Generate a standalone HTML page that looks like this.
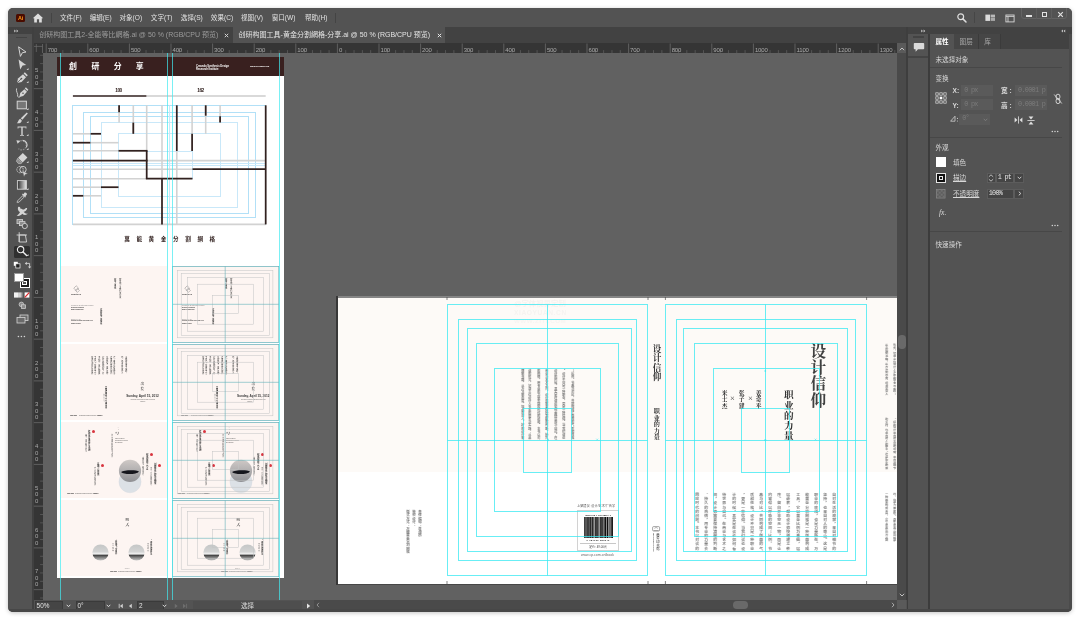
<!DOCTYPE html><html lang="zh"><head><meta charset="utf-8"><title>Illustrator</title><style>
html,body{margin:0;padding:0}
body{width:1080px;height:620px;background:#fff;position:relative;overflow:hidden;font-family:"Liberation Sans","Noto Sans CJK SC",sans-serif;}
#win{position:absolute;left:8px;top:8px;width:1064px;height:603.8px;background:#535353;border-radius:5px;overflow:hidden;}
#shadow{position:absolute;left:8px;top:8px;width:1064px;height:603.8px;border-radius:5px;box-shadow:0 1px 4px rgba(0,0,0,.24);}
#abs{position:absolute;left:-8px;top:-8px;width:1080px;height:620px;will-change:transform}
.a{position:absolute}
.menu{position:absolute;top:12.6px;font-size:6.6px;line-height:10px;color:#e2e2e2;white-space:nowrap}
.tab{position:absolute;top:30px;font-size:7px;line-height:10px;white-space:nowrap}
.rl{position:absolute;font-size:6px;line-height:6px;color:#aaa;white-space:nowrap;letter-spacing:-0.15px}
.pt{position:absolute;font-size:6.6px;line-height:9px;color:#d8d8d8;white-space:nowrap}
.v{writing-mode:vertical-rl;position:absolute;white-space:nowrap}
.serif{font-family:"Liberation Serif","Noto Serif CJK SC",serif}
</style></head><body>
<div id="shadow"></div><div id="win"><div id="abs">
<div class="a" style="left:8px;top:8px;width:1064px;height:19px;background:#535353"></div>
<div class="a" style="left:16.3px;top:14.2px;width:8.6px;height:7.6px;background:#4a0c00;border-radius:1.5px;"></div>
<div class="a" style="left:16.3px;top:14.6px;width:8.6px;height:7px;font-size:5.4px;line-height:7px;font-weight:bold;color:#ff9a1a;text-align:center;letter-spacing:-0.2px">Ai</div>
<svg class="a" style="left:32px;top:12.5px" width="12" height="10" viewBox="0 0 12 10"><path d="M6 0.6 L11.2 5.2 L9.8 5.2 L9.8 9.4 L7.1 9.4 L7.1 6.3 L4.9 6.3 L4.9 9.4 L2.2 9.4 L2.2 5.2 L0.8 5.2 Z" fill="#dedede"/></svg>
<div class="a" style="left:50.5px;top:12.5px;width:1px;height:10px;background:#444"></div>
<div class="menu" style="left:60px">文件(F)</div>
<div class="menu" style="left:89.7px">编辑(E)</div>
<div class="menu" style="left:119.4px">对象(O)</div>
<div class="menu" style="left:150.8px">文字(T)</div>
<div class="menu" style="left:180.8px">选择(S)</div>
<div class="menu" style="left:210.8px">效果(C)</div>
<div class="menu" style="left:241px">视图(V)</div>
<div class="menu" style="left:271.7px">窗口(W)</div>
<div class="menu" style="left:305px">帮助(H)</div>
<div class="a" style="left:334.6px;top:13px;width:1px;height:9.5px;background:#444"></div>
<svg class="a" style="left:955px;top:11px" width="14" height="14" viewBox="0 0 14 14"><circle cx="5.7" cy="5.7" r="2.9" fill="none" stroke="#dedede" stroke-width="1.2"/><path d="M7.9 7.9 L11 11" stroke="#dedede" stroke-width="1.5" stroke-linecap="round"/></svg>
<div class="a" style="left:973.6px;top:12.4px;width:1px;height:10.4px;background:#464646"></div>
<svg class="a" style="left:985px;top:14px" width="11" height="8" viewBox="0 0 11 8"><rect x="0.4" y="0.6" width="4.6" height="6.3" fill="#dcdcdc"/><rect x="5.6" y="0.6" width="4.4" height="2.9" fill="#b9b9b9"/><rect x="5.6" y="4" width="4.4" height="2.9" fill="#a9a9a9"/></svg>
<svg class="a" style="left:1004.5px;top:13.5px" width="10" height="9" viewBox="0 0 10 9"><rect x="0.9" y="1" width="8.2" height="6.9" fill="none" stroke="#d6d6d6" stroke-width="0.9"/><path d="M0.9 2.4H9.1M3 2.4V7.9" stroke="#d6d6d6" stroke-width="0.9" fill="none"/></svg>
<div class="a" style="left:1021px;top:7px;width:46px;height:12px;border:1px solid #636363;border-radius:0 0 3px 3px;box-sizing:border-box"></div>
<div class="a" style="left:1036.3px;top:8px;width:1px;height:10.5px;background:#5e5e5e"></div>
<div class="a" style="left:1051.4px;top:8px;width:1px;height:10.5px;background:#5e5e5e"></div>
<div class="a" style="left:1026.2px;top:15.2px;width:5.8px;height:1.4px;background:#e2e2e2"></div>
<div class="a" style="left:1041.6px;top:11.8px;width:5.4px;height:4.8px;border:1.2px solid #e2e2e2;box-sizing:border-box"></div>
<svg class="a" style="left:1056.5px;top:10.5px" width="7" height="7" viewBox="0 0 7 7"><path d="M1.2 1.2L5.8 5.8M5.8 1.2L1.2 5.8" stroke="#e2e2e2" stroke-width="1.2"/></svg>
<div class="a" style="left:32.5px;top:27px;width:875.5px;height:17px;background:#424242"></div>
<div class="a" style="left:233px;top:27px;width:211.5px;height:16.2px;background:#535353"></div>
<div class="tab" style="left:39.3px;color:#9c9c9c">创研构图工具2-全能等比網格.ai @ 50 % (RGB/CPU 预览)</div>
<div class="tab" style="left:238.6px;color:#e4e4e4">创研构图工具-黄金分割網格-分享.ai @ 50 % (RGB/CPU 预览)</div>
<svg class="a" style="left:224.3px;top:33px" width="5" height="5" viewBox="0 0 5 5"><path d="M0.8 0.8L4.2 4.2M4.2 0.8L0.8 4.2" stroke="#d0d0d0" stroke-width="1"/></svg>
<svg class="a" style="left:436.5px;top:33px" width="5" height="5" viewBox="0 0 5 5"><path d="M0.8 0.8L4.2 4.2M4.2 0.8L0.8 4.2" stroke="#e6e6e6" stroke-width="1"/></svg>
<div class="a" style="left:8px;top:27px;width:24.5px;height:585px;background:#535353"></div>
<div class="a" style="left:8px;top:27px;width:24.5px;height:7px;background:#424242"></div>
<div class="a" style="left:32px;top:27px;width:1.8px;height:585px;background:#404040"></div>
<svg class="a" style="left:13.5px;top:29px" width="5" height="4" viewBox="0 0 5 4"><path d="M0.3 0.6L1.9 2L0.3 3.4ZM2.6 0.6L4.2 2L2.6 3.4Z" fill="#d0d0d0"/></svg>
<div class="a" style="left:16px;top:36.6px;width:10.5px;height:1.6px;background:#434343"></div>
<svg class="a" style="left:14.70px;top:44.80px" width="14" height="14" viewBox="0 0 14 14"><path d="M3.6 1.8L11 7L7.4 7.7L5.4 11.4Z" fill="none" stroke="#d4d4d4" stroke-width="1" stroke-linejoin="miter"/></svg>
<svg class="a" style="left:14.70px;top:58.07px" width="14" height="14" viewBox="0 0 14 14"><path d="M3.6 1.4L11.2 7L7.6 7.6L5.2 11.6Z" fill="#d4d4d4"/><path d="M13.5 9.9V11.9H11.5Z" fill="#d4d4d4"/></svg>
<svg class="a" style="left:14.70px;top:71.34px" width="14" height="14" viewBox="0 0 14 14"><path d="M2 12L3 7.6L8 3.2L11 6.2L6.6 11Z" fill="#d4d4d4"/><path d="M8.6 2.4L9.8 1.2L12.8 4.2L11.6 5.4Z" fill="#d4d4d4"/><path d="M2 12L6 8" stroke="#535353" stroke-width="0.8"/><circle cx="6.4" cy="7.6" r="0.9" fill="#535353"/><path d="M13.5 9.9V11.9H11.5Z" fill="#d4d4d4"/></svg>
<svg class="a" style="left:14.70px;top:84.61px" width="14" height="14" viewBox="0 0 14 14"><path d="M4.4 12L5.2 8L9.4 4.2L12 6.8L8.2 11Z" fill="#d4d4d4"/><path d="M9.8 3.4L10.9 2.3L13.4 4.8L12.3 5.9Z" fill="#d4d4d4"/><circle cx="8" cy="8.2" r="0.8" fill="#535353"/><path d="M1.6 3.4C0.6 7 3.4 8 2.6 11.4C3.6 12.6 5 12.2 5.4 11.4" fill="none" stroke="#d4d4d4" stroke-width="0.9"/></svg>
<svg class="a" style="left:14.70px;top:97.88px" width="14" height="14" viewBox="0 0 14 14"><rect x="2.2" y="3.2" width="9.2" height="7.6" fill="#767676" stroke="#d4d4d4" stroke-width="1"/><path d="M13.5 9.9V11.9H11.5Z" fill="#d4d4d4"/></svg>
<svg class="a" style="left:14.70px;top:111.15px" width="14" height="14" viewBox="0 0 14 14"><path d="M11.8 1.4L12.8 2.4L7.4 8.8L5.8 7.2Z" fill="#d4d4d4"/><path d="M5.2 7.8L6.8 9.4C6.6 11.6 4.4 12.6 1.8 12.2C3.4 11.2 3 8.6 5.2 7.8Z" fill="#d4d4d4"/><path d="M13.5 9.9V11.9H11.5Z" fill="#d4d4d4"/></svg>
<svg class="a" style="left:14.70px;top:124.42px" width="14" height="14" viewBox="0 0 14 14"><path d="M2.6 2.4H11.4V4.6H10.6V3.6H7.7V11H9V11.8H5V11H6.3V3.6H3.4V4.6H2.6Z" fill="#d4d4d4"/><path d="M13.5 9.9V11.9H11.5Z" fill="#d4d4d4"/></svg>
<svg class="a" style="left:14.70px;top:137.69px" width="14" height="14" viewBox="0 0 14 14"><path d="M3.2 4.2A4.6 4.6 0 1 1 3.4 10.6" fill="none" stroke="#8c8c8c" stroke-width="1.1" stroke-dasharray="1.6 0.9"/><path d="M7.6 2.4A4.6 4.6 0 0 1 11.4 9.4" fill="none" stroke="#d4d4d4" stroke-width="1.1"/><path d="M1.4 2.2L5.4 2.8L2.6 5.8Z" fill="#d4d4d4"/><path d="M13.5 9.9V11.9H11.5Z" fill="#d4d4d4"/></svg>
<svg class="a" style="left:14.70px;top:150.96px" width="14" height="14" viewBox="0 0 14 14"><path d="M7.8 2L12.4 6.6L7.6 11.4L3 6.8Z" fill="#d4d4d4"/><path d="M2.6 7.4L7 11.8L5.8 12.6H3.4L1.4 10.2Z" fill="#8c8c8c" stroke="#d4d4d4" stroke-width="0.6"/><path d="M13.5 9.9V11.9H11.5Z" fill="#d4d4d4"/></svg>
<svg class="a" style="left:14.70px;top:164.23px" width="14" height="14" viewBox="0 0 14 14"><circle cx="5" cy="5.6" r="3.2" fill="none" stroke="#d4d4d4" stroke-width="0.9" stroke-dasharray="1.4 0.8"/><circle cx="8" cy="5.6" r="3.2" fill="none" stroke="#d4d4d4" stroke-width="0.9"/><path d="M7.4 6.6L12.8 9.8L10.2 10.4L9 12.8Z" fill="#d4d4d4" stroke="#535353" stroke-width="0.4"/></svg>
<svg class="a" style="left:14.70px;top:177.50px" width="14" height="14" viewBox="0 0 14 14"><defs><linearGradient id="tg" x1="0" y1="0" x2="1" y2="0"><stop offset="0" stop-color="#2e2e2e"/><stop offset="1" stop-color="#e8e8e8"/></linearGradient></defs><rect x="2.4" y="2.6" width="9" height="8.6" fill="url(#tg)" stroke="#d4d4d4" stroke-width="0.9"/><path d="M13.5 9.9V11.9H11.5Z" fill="#d4d4d4"/></svg>
<svg class="a" style="left:14.70px;top:190.77px" width="14" height="14" viewBox="0 0 14 14"><path d="M9.6 1.6C10.6 0.8 12.6 2.6 11.8 3.8L10.4 5.2L11 5.8L10.2 6.6L7 3.4L7.8 2.6L8.4 3.2Z" fill="#d4d4d4"/><path d="M7.6 4.8L9 6.2L4.2 11L2.4 11.6L2 11.2L2.8 9.6Z" fill="none" stroke="#d4d4d4" stroke-width="0.8"/></svg>
<svg class="a" style="left:14.70px;top:204.04px" width="14" height="14" viewBox="0 0 14 14"><path d="M3 3.2C4.4 2.2 5.6 3.2 5.2 4.4C7 4.2 7.6 6.2 9.4 5.2C10.6 4.4 11.6 3.6 12.2 4.4C11.6 6 10.4 7.4 8.6 7.8C9.6 9.4 11.2 9.8 12.6 9.6C11.8 11.4 9 11.6 7.2 9.8C5.8 11.6 3.6 12.4 1.6 11.6C3.2 10.8 4.6 9.6 5 8C3.6 7.4 2.4 5.6 3 3.2Z" fill="#d4d4d4"/></svg>
<svg class="a" style="left:14.70px;top:217.31px" width="14" height="14" viewBox="0 0 14 14"><rect x="2" y="2.6" width="5.6" height="4" fill="#8c8c8c" stroke="#d4d4d4" stroke-width="0.8"/><rect x="4.4" y="4.6" width="5.6" height="4" fill="#8c8c8c" stroke="#d4d4d4" stroke-width="0.8"/><circle cx="9.8" cy="9" r="2.6" fill="#535353" stroke="#d4d4d4" stroke-width="0.9"/></svg>
<svg class="a" style="left:14.70px;top:230.58px" width="14" height="14" viewBox="0 0 14 14"><path d="M4.2 1.2V11M1.6 4H12" stroke="#d4d4d4" stroke-width="0.9" fill="none"/><path d="M4.2 4H10.4L11.6 11H4.2Z" fill="none" stroke="#d4d4d4" stroke-width="0.9"/></svg>
<div class="a" style="left:14.3px;top:246px;width:15.3px;height:11.6px;background:#2f2f2f;border-radius:1.5px"></div>
<svg class="a" style="left:14.70px;top:244.40px" width="14" height="14" viewBox="0 0 14 14"><circle cx="5.6" cy="5.6" r="3.2" fill="none" stroke="#eee" stroke-width="1.1"/><path d="M8 8L11.6 11.6" stroke="#eee" stroke-width="1.4" stroke-linecap="round"/><path d="M13.5 9.9V11.9H11.5Z" fill="#d4d4d4"/></svg>
<svg class="a" style="left:12.6px;top:261.4px" width="8" height="8" viewBox="0 0 8 8"><rect x="0.8" y="0.8" width="4" height="4" fill="#fff"/><rect x="2.8" y="2.8" width="4.2" height="4.2" fill="#222" stroke="#fff" stroke-width="0.7"/></svg>
<svg class="a" style="left:24px;top:261.2px" width="8" height="8" viewBox="0 0 8 8"><path d="M2.2 2.4H5.6V5.8" fill="none" stroke="#d4d4d4" stroke-width="0.9"/><path d="M0.8 2.4L2.8 0.8V4Z" fill="#d4d4d4"/><path d="M5.6 7.4L4 5.4H7.2Z" fill="#d4d4d4"/></svg>
<div class="a" style="left:19.5px;top:277.8px;width:10.2px;height:10px;background:#1c1c1c;border:1.2px solid #fff;box-sizing:border-box"></div>
<div class="a" style="left:22.3px;top:280.6px;width:4.6px;height:4.4px;background:#535353;border:1px solid #fff;box-sizing:border-box"></div>
<div class="a" style="left:13.9px;top:272.6px;width:10.4px;height:9.9px;background:#fff;border:0.5px solid #9a9a9a;box-sizing:border-box"></div>
<svg class="a" style="left:14.3px;top:291.6px" width="16" height="6" viewBox="0 0 16 6"><defs><linearGradient id="tg2" x1="0" y1="0" x2="1" y2="0"><stop offset="0" stop-color="#fff"/><stop offset="1" stop-color="#444"/></linearGradient></defs><rect x="0" y="0.4" width="4.8" height="5.2" fill="#f2f2f2"/><rect x="5.2" y="0.4" width="4.8" height="5.2" fill="url(#tg2)"/><rect x="10.6" y="0.4" width="4.8" height="5.2" fill="#fff"/><path d="M10.8 5.4L15.2 0.6" stroke="#e0262b" stroke-width="1.2"/></svg>
<svg class="a" style="left:17.5px;top:301px" width="9" height="9" viewBox="0 0 9 9"><circle cx="3.4" cy="3.4" r="2.3" fill="#8c8c8c" stroke="#d4d4d4" stroke-width="0.7"/><rect x="3.6" y="3.8" width="4" height="3.8" fill="#8c8c8c" stroke="#d4d4d4" stroke-width="0.7"/></svg>
<svg class="a" style="left:15.6px;top:313.6px" width="13" height="10" viewBox="0 0 13 10"><rect x="4" y="1" width="8" height="5.6" fill="#6a6a6a" stroke="#d4d4d4" stroke-width="0.8"/><rect x="1" y="3.4" width="8" height="5.6" fill="#6a6a6a" stroke="#d4d4d4" stroke-width="0.8"/></svg>
<svg class="a" style="left:17.4px;top:335px" width="9" height="3" viewBox="0 0 9 3"><circle cx="1.4" cy="1.5" r="0.8" fill="#d4d4d4"/><circle cx="4.4" cy="1.5" r="0.8" fill="#d4d4d4"/><circle cx="7.4" cy="1.5" r="0.8" fill="#d4d4d4"/></svg>
<div class="a" style="left:33.7px;top:43.3px;width:864px;height:9.7px;background:#353535"></div>
<div class="a" style="left:33.7px;top:43.3px;width:9.3px;height:557px;background:#353535"></div>
<svg class="a" style="left:33px;top:43px" width="11" height="10" viewBox="33 43 11 10"><path d="M34 46.4H42.5M36.3 44V52M42.5 44V53" stroke="#6e6e6e" stroke-width="0.7" fill="none"/></svg>
<svg class="a" style="left:43px;top:43px" width="855" height="10" viewBox="43 43 855 10"><path d="M46.20 43.5V53" stroke="#6a6a6a" stroke-width="0.8"/><path d="M54.52 50.1V53" stroke="#636363" stroke-width="0.7"/><path d="M62.84 50.1V53" stroke="#636363" stroke-width="0.7"/><path d="M71.16 50.1V53" stroke="#636363" stroke-width="0.7"/><path d="M79.48 50.1V53" stroke="#636363" stroke-width="0.7"/><path d="M87.80 43.5V53" stroke="#6a6a6a" stroke-width="0.8"/><path d="M96.12 50.1V53" stroke="#636363" stroke-width="0.7"/><path d="M104.44 50.1V53" stroke="#636363" stroke-width="0.7"/><path d="M112.76 50.1V53" stroke="#636363" stroke-width="0.7"/><path d="M121.08 50.1V53" stroke="#636363" stroke-width="0.7"/><path d="M129.40 43.5V53" stroke="#6a6a6a" stroke-width="0.8"/><path d="M137.72 50.1V53" stroke="#636363" stroke-width="0.7"/><path d="M146.04 50.1V53" stroke="#636363" stroke-width="0.7"/><path d="M154.36 50.1V53" stroke="#636363" stroke-width="0.7"/><path d="M162.68 50.1V53" stroke="#636363" stroke-width="0.7"/><path d="M171.00 43.5V53" stroke="#6a6a6a" stroke-width="0.8"/><path d="M179.32 50.1V53" stroke="#636363" stroke-width="0.7"/><path d="M187.64 50.1V53" stroke="#636363" stroke-width="0.7"/><path d="M195.96 50.1V53" stroke="#636363" stroke-width="0.7"/><path d="M204.28 50.1V53" stroke="#636363" stroke-width="0.7"/><path d="M212.60 43.5V53" stroke="#6a6a6a" stroke-width="0.8"/><path d="M220.92 50.1V53" stroke="#636363" stroke-width="0.7"/><path d="M229.24 50.1V53" stroke="#636363" stroke-width="0.7"/><path d="M237.56 50.1V53" stroke="#636363" stroke-width="0.7"/><path d="M245.88 50.1V53" stroke="#636363" stroke-width="0.7"/><path d="M254.20 43.5V53" stroke="#6a6a6a" stroke-width="0.8"/><path d="M262.52 50.1V53" stroke="#636363" stroke-width="0.7"/><path d="M270.84 50.1V53" stroke="#636363" stroke-width="0.7"/><path d="M279.16 50.1V53" stroke="#636363" stroke-width="0.7"/><path d="M287.48 50.1V53" stroke="#636363" stroke-width="0.7"/><path d="M295.80 43.5V53" stroke="#6a6a6a" stroke-width="0.8"/><path d="M304.12 50.1V53" stroke="#636363" stroke-width="0.7"/><path d="M312.44 50.1V53" stroke="#636363" stroke-width="0.7"/><path d="M320.76 50.1V53" stroke="#636363" stroke-width="0.7"/><path d="M329.08 50.1V53" stroke="#636363" stroke-width="0.7"/><path d="M337.40 43.5V53" stroke="#6a6a6a" stroke-width="0.8"/><path d="M345.72 50.1V53" stroke="#636363" stroke-width="0.7"/><path d="M354.04 50.1V53" stroke="#636363" stroke-width="0.7"/><path d="M362.36 50.1V53" stroke="#636363" stroke-width="0.7"/><path d="M370.68 50.1V53" stroke="#636363" stroke-width="0.7"/><path d="M379.00 43.5V53" stroke="#6a6a6a" stroke-width="0.8"/><path d="M387.32 50.1V53" stroke="#636363" stroke-width="0.7"/><path d="M395.64 50.1V53" stroke="#636363" stroke-width="0.7"/><path d="M403.96 50.1V53" stroke="#636363" stroke-width="0.7"/><path d="M412.28 50.1V53" stroke="#636363" stroke-width="0.7"/><path d="M420.60 43.5V53" stroke="#6a6a6a" stroke-width="0.8"/><path d="M428.92 50.1V53" stroke="#636363" stroke-width="0.7"/><path d="M437.24 50.1V53" stroke="#636363" stroke-width="0.7"/><path d="M445.56 50.1V53" stroke="#636363" stroke-width="0.7"/><path d="M453.88 50.1V53" stroke="#636363" stroke-width="0.7"/><path d="M462.20 43.5V53" stroke="#6a6a6a" stroke-width="0.8"/><path d="M470.52 50.1V53" stroke="#636363" stroke-width="0.7"/><path d="M478.84 50.1V53" stroke="#636363" stroke-width="0.7"/><path d="M487.16 50.1V53" stroke="#636363" stroke-width="0.7"/><path d="M495.48 50.1V53" stroke="#636363" stroke-width="0.7"/><path d="M503.80 43.5V53" stroke="#6a6a6a" stroke-width="0.8"/><path d="M512.12 50.1V53" stroke="#636363" stroke-width="0.7"/><path d="M520.44 50.1V53" stroke="#636363" stroke-width="0.7"/><path d="M528.76 50.1V53" stroke="#636363" stroke-width="0.7"/><path d="M537.08 50.1V53" stroke="#636363" stroke-width="0.7"/><path d="M545.40 43.5V53" stroke="#6a6a6a" stroke-width="0.8"/><path d="M553.72 50.1V53" stroke="#636363" stroke-width="0.7"/><path d="M562.04 50.1V53" stroke="#636363" stroke-width="0.7"/><path d="M570.36 50.1V53" stroke="#636363" stroke-width="0.7"/><path d="M578.68 50.1V53" stroke="#636363" stroke-width="0.7"/><path d="M587.00 43.5V53" stroke="#6a6a6a" stroke-width="0.8"/><path d="M595.32 50.1V53" stroke="#636363" stroke-width="0.7"/><path d="M603.64 50.1V53" stroke="#636363" stroke-width="0.7"/><path d="M611.96 50.1V53" stroke="#636363" stroke-width="0.7"/><path d="M620.28 50.1V53" stroke="#636363" stroke-width="0.7"/><path d="M628.60 43.5V53" stroke="#6a6a6a" stroke-width="0.8"/><path d="M636.92 50.1V53" stroke="#636363" stroke-width="0.7"/><path d="M645.24 50.1V53" stroke="#636363" stroke-width="0.7"/><path d="M653.56 50.1V53" stroke="#636363" stroke-width="0.7"/><path d="M661.88 50.1V53" stroke="#636363" stroke-width="0.7"/><path d="M670.20 43.5V53" stroke="#6a6a6a" stroke-width="0.8"/><path d="M678.52 50.1V53" stroke="#636363" stroke-width="0.7"/><path d="M686.84 50.1V53" stroke="#636363" stroke-width="0.7"/><path d="M695.16 50.1V53" stroke="#636363" stroke-width="0.7"/><path d="M703.48 50.1V53" stroke="#636363" stroke-width="0.7"/><path d="M711.80 43.5V53" stroke="#6a6a6a" stroke-width="0.8"/><path d="M720.12 50.1V53" stroke="#636363" stroke-width="0.7"/><path d="M728.44 50.1V53" stroke="#636363" stroke-width="0.7"/><path d="M736.76 50.1V53" stroke="#636363" stroke-width="0.7"/><path d="M745.08 50.1V53" stroke="#636363" stroke-width="0.7"/><path d="M753.40 43.5V53" stroke="#6a6a6a" stroke-width="0.8"/><path d="M761.72 50.1V53" stroke="#636363" stroke-width="0.7"/><path d="M770.04 50.1V53" stroke="#636363" stroke-width="0.7"/><path d="M778.36 50.1V53" stroke="#636363" stroke-width="0.7"/><path d="M786.68 50.1V53" stroke="#636363" stroke-width="0.7"/><path d="M795.00 43.5V53" stroke="#6a6a6a" stroke-width="0.8"/><path d="M803.32 50.1V53" stroke="#636363" stroke-width="0.7"/><path d="M811.64 50.1V53" stroke="#636363" stroke-width="0.7"/><path d="M819.96 50.1V53" stroke="#636363" stroke-width="0.7"/><path d="M828.28 50.1V53" stroke="#636363" stroke-width="0.7"/><path d="M836.60 43.5V53" stroke="#6a6a6a" stroke-width="0.8"/><path d="M844.92 50.1V53" stroke="#636363" stroke-width="0.7"/><path d="M853.24 50.1V53" stroke="#636363" stroke-width="0.7"/><path d="M861.56 50.1V53" stroke="#636363" stroke-width="0.7"/><path d="M869.88 50.1V53" stroke="#636363" stroke-width="0.7"/><path d="M878.20 43.5V53" stroke="#6a6a6a" stroke-width="0.8"/><path d="M886.52 50.1V53" stroke="#636363" stroke-width="0.7"/><path d="M894.84 50.1V53" stroke="#636363" stroke-width="0.7"/></svg>
<div class="rl" style="left:47.7px;top:47px">700</div>
<div class="rl" style="left:89.3px;top:47px">600</div>
<div class="rl" style="left:130.9px;top:47px">500</div>
<div class="rl" style="left:172.5px;top:47px">400</div>
<div class="rl" style="left:214.1px;top:47px">300</div>
<div class="rl" style="left:255.7px;top:47px">200</div>
<div class="rl" style="left:297.3px;top:47px">100</div>
<div class="rl" style="left:338.9px;top:47px">0</div>
<div class="rl" style="left:380.5px;top:47px">100</div>
<div class="rl" style="left:422.1px;top:47px">200</div>
<div class="rl" style="left:463.7px;top:47px">300</div>
<div class="rl" style="left:505.3px;top:47px">400</div>
<div class="rl" style="left:546.9px;top:47px">500</div>
<div class="rl" style="left:588.5px;top:47px">600</div>
<div class="rl" style="left:630.1px;top:47px">700</div>
<div class="rl" style="left:671.7px;top:47px">800</div>
<div class="rl" style="left:713.3px;top:47px">900</div>
<div class="rl" style="left:754.9px;top:47px">1000</div>
<div class="rl" style="left:796.5px;top:47px">1100</div>
<div class="rl" style="left:838.1px;top:47px">1200</div>
<div class="rl" style="left:879.7px;top:47px">1300</div>
<svg class="a" style="left:33px;top:53px" width="10" height="547" viewBox="33 53 10 547"><path d="M40.1 55.25H43" stroke="#636363" stroke-width="0.7"/><path d="M40.1 63.60H43" stroke="#636363" stroke-width="0.7"/><path d="M40.1 71.95H43" stroke="#636363" stroke-width="0.7"/><path d="M40.1 80.30H43" stroke="#636363" stroke-width="0.7"/><path d="M33.8 88.65H43" stroke="#6a6a6a" stroke-width="0.8"/><path d="M40.1 97.00H43" stroke="#636363" stroke-width="0.7"/><path d="M40.1 105.35H43" stroke="#636363" stroke-width="0.7"/><path d="M40.1 113.70H43" stroke="#636363" stroke-width="0.7"/><path d="M40.1 122.05H43" stroke="#636363" stroke-width="0.7"/><path d="M33.8 130.40H43" stroke="#6a6a6a" stroke-width="0.8"/><path d="M40.1 138.75H43" stroke="#636363" stroke-width="0.7"/><path d="M40.1 147.10H43" stroke="#636363" stroke-width="0.7"/><path d="M40.1 155.45H43" stroke="#636363" stroke-width="0.7"/><path d="M40.1 163.80H43" stroke="#636363" stroke-width="0.7"/><path d="M33.8 172.15H43" stroke="#6a6a6a" stroke-width="0.8"/><path d="M40.1 180.50H43" stroke="#636363" stroke-width="0.7"/><path d="M40.1 188.85H43" stroke="#636363" stroke-width="0.7"/><path d="M40.1 197.20H43" stroke="#636363" stroke-width="0.7"/><path d="M40.1 205.55H43" stroke="#636363" stroke-width="0.7"/><path d="M33.8 213.90H43" stroke="#6a6a6a" stroke-width="0.8"/><path d="M40.1 222.25H43" stroke="#636363" stroke-width="0.7"/><path d="M40.1 230.60H43" stroke="#636363" stroke-width="0.7"/><path d="M40.1 238.95H43" stroke="#636363" stroke-width="0.7"/><path d="M40.1 247.30H43" stroke="#636363" stroke-width="0.7"/><path d="M33.8 255.65H43" stroke="#6a6a6a" stroke-width="0.8"/><path d="M40.1 264.00H43" stroke="#636363" stroke-width="0.7"/><path d="M40.1 272.35H43" stroke="#636363" stroke-width="0.7"/><path d="M40.1 280.70H43" stroke="#636363" stroke-width="0.7"/><path d="M40.1 289.05H43" stroke="#636363" stroke-width="0.7"/><path d="M33.8 297.40H43" stroke="#6a6a6a" stroke-width="0.8"/><path d="M40.1 305.75H43" stroke="#636363" stroke-width="0.7"/><path d="M40.1 314.10H43" stroke="#636363" stroke-width="0.7"/><path d="M40.1 322.45H43" stroke="#636363" stroke-width="0.7"/><path d="M40.1 330.80H43" stroke="#636363" stroke-width="0.7"/><path d="M33.8 339.15H43" stroke="#6a6a6a" stroke-width="0.8"/><path d="M40.1 347.50H43" stroke="#636363" stroke-width="0.7"/><path d="M40.1 355.85H43" stroke="#636363" stroke-width="0.7"/><path d="M40.1 364.20H43" stroke="#636363" stroke-width="0.7"/><path d="M40.1 372.55H43" stroke="#636363" stroke-width="0.7"/><path d="M33.8 380.90H43" stroke="#6a6a6a" stroke-width="0.8"/><path d="M40.1 389.25H43" stroke="#636363" stroke-width="0.7"/><path d="M40.1 397.60H43" stroke="#636363" stroke-width="0.7"/><path d="M40.1 405.95H43" stroke="#636363" stroke-width="0.7"/><path d="M40.1 414.30H43" stroke="#636363" stroke-width="0.7"/><path d="M33.8 422.65H43" stroke="#6a6a6a" stroke-width="0.8"/><path d="M40.1 431.00H43" stroke="#636363" stroke-width="0.7"/><path d="M40.1 439.35H43" stroke="#636363" stroke-width="0.7"/><path d="M40.1 447.70H43" stroke="#636363" stroke-width="0.7"/><path d="M40.1 456.05H43" stroke="#636363" stroke-width="0.7"/><path d="M33.8 464.40H43" stroke="#6a6a6a" stroke-width="0.8"/><path d="M40.1 472.75H43" stroke="#636363" stroke-width="0.7"/><path d="M40.1 481.10H43" stroke="#636363" stroke-width="0.7"/><path d="M40.1 489.45H43" stroke="#636363" stroke-width="0.7"/><path d="M40.1 497.80H43" stroke="#636363" stroke-width="0.7"/><path d="M33.8 506.15H43" stroke="#6a6a6a" stroke-width="0.8"/><path d="M40.1 514.50H43" stroke="#636363" stroke-width="0.7"/><path d="M40.1 522.85H43" stroke="#636363" stroke-width="0.7"/><path d="M40.1 531.20H43" stroke="#636363" stroke-width="0.7"/><path d="M40.1 539.55H43" stroke="#636363" stroke-width="0.7"/><path d="M33.8 547.90H43" stroke="#6a6a6a" stroke-width="0.8"/><path d="M40.1 556.25H43" stroke="#636363" stroke-width="0.7"/><path d="M40.1 564.60H43" stroke="#636363" stroke-width="0.7"/><path d="M40.1 572.95H43" stroke="#636363" stroke-width="0.7"/><path d="M40.1 581.30H43" stroke="#636363" stroke-width="0.7"/><path d="M33.8 589.65H43" stroke="#6a6a6a" stroke-width="0.8"/><path d="M40.1 598.00H43" stroke="#636363" stroke-width="0.7"/></svg>
<div class="rl" style="left:34px;top:67.3px;width:5px;text-align:center">5</div>
<div class="rl" style="left:34px;top:73.9px;width:5px;text-align:center">0</div>
<div class="rl" style="left:34px;top:80.4px;width:5px;text-align:center">0</div>
<div class="rl" style="left:34px;top:109.1px;width:5px;text-align:center">4</div>
<div class="rl" style="left:34px;top:115.6px;width:5px;text-align:center">0</div>
<div class="rl" style="left:34px;top:122.2px;width:5px;text-align:center">0</div>
<div class="rl" style="left:34px;top:150.8px;width:5px;text-align:center">3</div>
<div class="rl" style="left:34px;top:157.4px;width:5px;text-align:center">0</div>
<div class="rl" style="left:34px;top:163.9px;width:5px;text-align:center">0</div>
<div class="rl" style="left:34px;top:192.6px;width:5px;text-align:center">2</div>
<div class="rl" style="left:34px;top:199.1px;width:5px;text-align:center">0</div>
<div class="rl" style="left:34px;top:205.7px;width:5px;text-align:center">0</div>
<div class="rl" style="left:34px;top:234.3px;width:5px;text-align:center">1</div>
<div class="rl" style="left:34px;top:240.9px;width:5px;text-align:center">0</div>
<div class="rl" style="left:34px;top:247.4px;width:5px;text-align:center">0</div>
<div class="rl" style="left:34px;top:289.2px;width:5px;text-align:center">0</div>
<div class="rl" style="left:34px;top:317.8px;width:5px;text-align:center">1</div>
<div class="rl" style="left:34px;top:324.4px;width:5px;text-align:center">0</div>
<div class="rl" style="left:34px;top:330.9px;width:5px;text-align:center">0</div>
<div class="rl" style="left:34px;top:359.6px;width:5px;text-align:center">2</div>
<div class="rl" style="left:34px;top:366.1px;width:5px;text-align:center">0</div>
<div class="rl" style="left:34px;top:372.7px;width:5px;text-align:center">0</div>
<div class="rl" style="left:34px;top:401.3px;width:5px;text-align:center">3</div>
<div class="rl" style="left:34px;top:407.9px;width:5px;text-align:center">0</div>
<div class="rl" style="left:34px;top:414.4px;width:5px;text-align:center">0</div>
<div class="rl" style="left:34px;top:443.1px;width:5px;text-align:center">4</div>
<div class="rl" style="left:34px;top:449.6px;width:5px;text-align:center">0</div>
<div class="rl" style="left:34px;top:456.2px;width:5px;text-align:center">0</div>
<div class="rl" style="left:34px;top:484.8px;width:5px;text-align:center">5</div>
<div class="rl" style="left:34px;top:491.4px;width:5px;text-align:center">0</div>
<div class="rl" style="left:34px;top:497.9px;width:5px;text-align:center">0</div>
<div class="rl" style="left:34px;top:526.6px;width:5px;text-align:center">6</div>
<div class="rl" style="left:34px;top:533.1px;width:5px;text-align:center">0</div>
<div class="rl" style="left:34px;top:539.7px;width:5px;text-align:center">0</div>
<div class="rl" style="left:34px;top:568.3px;width:5px;text-align:center">7</div>
<div class="rl" style="left:34px;top:574.9px;width:5px;text-align:center">0</div>
<div class="rl" style="left:34px;top:581.4px;width:5px;text-align:center">0</div>
<div id="canvas" class="a" style="left:43px;top:53px;width:854.2px;height:547.5px;background:#616161;overflow:hidden"><div class="a" style="left:-43px;top:-53px;width:1080px;height:620px;will-change:transform">
<div class="a" style="left:56.8px;top:56.8px;width:227px;height:521.3px;background:#fff"></div>
<div class="a" style="left:336.4px;top:296.4px;width:600px;height:288.4px;background:#474747"></div>
<div class="a" style="left:336.4px;top:296.4px;width:1.2px;height:288.2px;background:#383838"></div>
<div class="a" style="left:337.5px;top:296.4px;width:600px;height:1.3px;background:#868686"></div>
<div class="a" style="left:337.5px;top:297.6px;width:600px;height:286px;background:#fff"></div>
<div class="a" style="left:337.5px;top:297.6px;width:600px;height:174.2px;background:#fdfaf7"></div>
<div class="a" style="left:56.8px;top:56.8px;width:227px;height:19.2px;background:#39201f"></div>
<div class="a" style="left:68.0px;top:62.2px;width:10px;text-align:center;font-size:7.9px;line-height:10px;font-weight:bold;color:#fff">創</div>
<div class="a" style="left:90.5px;top:62.2px;width:10px;text-align:center;font-size:7.9px;line-height:10px;font-weight:bold;color:#fff">研</div>
<div class="a" style="left:112.6px;top:62.2px;width:10px;text-align:center;font-size:7.9px;line-height:10px;font-weight:bold;color:#fff">分</div>
<div class="a" style="left:134.7px;top:62.2px;width:10px;text-align:center;font-size:7.9px;line-height:10px;font-weight:bold;color:#fff">享</div>
<div class="a" style="left:196.00px;top:63.58px;width:240.00px;height:25.92px;font-size:21.60px;line-height:25.92px;color:#fff;font-weight:bold;white-space:nowrap;text-align:left;letter-spacing:-0.40px;transform:scale(0.1250);transform-origin:0 0">Creando Synthesis Design</div>
<div class="a" style="left:196.00px;top:66.68px;width:240.00px;height:25.92px;font-size:21.60px;line-height:25.92px;color:#fff;font-weight:bold;white-space:nowrap;text-align:left;letter-spacing:-0.40px;transform:scale(0.1250);transform-origin:0 0">Research Institute</div>
<div class="a" style="left:249.80px;top:64.76px;width:161.60px;height:23.04px;font-size:19.20px;line-height:23.04px;color:#fff;font-weight:bold;white-space:nowrap;text-align:left;letter-spacing:-0.40px;transform:scale(0.1250);transform-origin:0 0">www.creando.org</div>
<div class="a" style="left:112.00px;top:87.22px;width:104.00px;height:46.08px;font-size:38.40px;line-height:46.08px;color:#31211f;font-weight:bold;white-space:nowrap;text-align:center;letter-spacing:-4.40px;transform:scale(0.1250);transform-origin:0 0">100</div>
<div class="a" style="left:194.00px;top:87.22px;width:104.00px;height:46.08px;font-size:38.40px;line-height:46.08px;color:#31211f;font-weight:bold;white-space:nowrap;text-align:center;letter-spacing:-4.40px;transform:scale(0.1250);transform-origin:0 0">162</div>
<svg class="a" style="left:56px;top:80px" width="230" height="160" viewBox="56 80 230 160"><path d="M146.4 96H265.7" stroke="#cdcdcd" stroke-width="1.5"/><path d="M72.9 96H146.4" stroke="#31211f" stroke-width="1.5"/><rect x="72.5" y="105.5" width="193.0" height="119.0" fill="none" stroke="#b2e0f7" stroke-width="1"/><rect x="83.5" y="112.5" width="172.0" height="105.0" fill="none" stroke="#b2e0f7" stroke-width="1"/><rect x="90.5" y="116.5" width="158.0" height="97.0" fill="none" stroke="#b2e0f7" stroke-width="1"/><rect x="101.5" y="122.5" width="136.0" height="85.0" fill="none" stroke="#c9e8f9" stroke-width="1"/><rect x="118.5" y="133.5" width="102.0" height="63.0" fill="none" stroke="#c9e8f9" stroke-width="1"/><rect x="146.5" y="151.5" width="46.0" height="27.0" fill="none" stroke="#c9e8f9" stroke-width="1"/><path d="M72.9 163.5H265.7M72.9 165.5H265.7M169.5 105.5V224" stroke="#c9e8f9" stroke-width="1" fill="none"/><path d="M119.1 105.3L119.1 122.6" stroke="#d2d2d2" stroke-width="1.6"/><path d="M133.3 105.3L133.3 133.8" stroke="#d2d2d2" stroke-width="1.6"/><path d="M146.7 105.3L146.7 151.0" stroke="#d2d2d2" stroke-width="1.6"/><path d="M162.0 105.3L162.0 178.7" stroke="#d2d2d2" stroke-width="1.6"/><path d="M176.8 151.0L176.8 224.4" stroke="#d2d2d2" stroke-width="1.6"/><path d="M192.1 105.3L192.1 133.8" stroke="#d2d2d2" stroke-width="1.6"/><path d="M205.7 105.3L205.7 133.8" stroke="#d2d2d2" stroke-width="1.6"/><path d="M220.1 105.3L220.1 122.6" stroke="#d2d2d2" stroke-width="1.6"/><path d="M72.9 133.8L90.6 133.8" stroke="#d2d2d2" stroke-width="1.6"/><path d="M90.4 142.7L118.5 142.7" stroke="#d2d2d2" stroke-width="1.6"/><path d="M72.9 150.8L118.5 150.8" stroke="#d2d2d2" stroke-width="1.6"/><path d="M146.7 160.6L265.7 160.6" stroke="#d2d2d2" stroke-width="1.6"/><path d="M72.9 169.2L192.5 169.2" stroke="#d2d2d2" stroke-width="1.6"/><path d="M72.9 178.7L146.7 178.7" stroke="#d2d2d2" stroke-width="1.6"/><path d="M72.9 187.2L101.0 187.2" stroke="#d2d2d2" stroke-width="1.6"/><path d="M83.3 195.8L101.0 195.8" stroke="#d2d2d2" stroke-width="1.6"/><path d="M72.9 224.4L265.7 224.4" stroke="#d2d2d2" stroke-width="1.6"/><path d="M119.1 105.3L119.1 112.3" stroke="#31211f" stroke-width="1.75"/><path d="M133.3 122.6L133.3 133.8" stroke="#31211f" stroke-width="1.75"/><path d="M146.7 150.8L146.7 178.7" stroke="#31211f" stroke-width="1.75"/><path d="M162.0 178.7L162.0 224.4" stroke="#31211f" stroke-width="1.75"/><path d="M176.8 105.3L176.8 151.0" stroke="#31211f" stroke-width="1.75"/><path d="M192.1 133.8L192.1 151.0" stroke="#31211f" stroke-width="1.75"/><path d="M205.7 105.3L205.7 115.7" stroke="#31211f" stroke-width="1.75"/><path d="M220.1 116.3L220.1 122.6" stroke="#31211f" stroke-width="1.75"/><path d="M265.7 105.3L265.7 224.4" stroke="#31211f" stroke-width="1.75"/><path d="M90.6 133.8L101.0 133.8" stroke="#31211f" stroke-width="1.75"/><path d="M72.9 142.7L90.4 142.7" stroke="#31211f" stroke-width="1.75"/><path d="M118.5 150.8L147.5 150.8" stroke="#31211f" stroke-width="1.75"/><path d="M72.9 160.6L147.5 160.6" stroke="#31211f" stroke-width="1.75"/><path d="M192.5 169.2L265.7 169.2" stroke="#31211f" stroke-width="1.75"/><path d="M145.9 178.7L192.5 178.7" stroke="#31211f" stroke-width="1.75"/><path d="M101.0 187.2L118.5 187.2" stroke="#31211f" stroke-width="1.75"/><path d="M72.9 195.8L83.3 195.8" stroke="#31211f" stroke-width="1.75"/></svg>
<div class="a" style="left:123.0px;top:235.6px;width:8px;text-align:center;font-size:5.6px;line-height:7px;font-weight:bold;color:#31211f">萬</div>
<div class="a" style="left:135.2px;top:235.6px;width:8px;text-align:center;font-size:5.6px;line-height:7px;font-weight:bold;color:#31211f">能</div>
<div class="a" style="left:147.4px;top:235.6px;width:8px;text-align:center;font-size:5.6px;line-height:7px;font-weight:bold;color:#31211f">黄</div>
<div class="a" style="left:159.6px;top:235.6px;width:8px;text-align:center;font-size:5.6px;line-height:7px;font-weight:bold;color:#31211f">金</div>
<div class="a" style="left:171.8px;top:235.6px;width:8px;text-align:center;font-size:5.6px;line-height:7px;font-weight:bold;color:#31211f">分</div>
<div class="a" style="left:184.0px;top:235.6px;width:8px;text-align:center;font-size:5.6px;line-height:7px;font-weight:bold;color:#31211f">割</div>
<div class="a" style="left:196.2px;top:235.6px;width:8px;text-align:center;font-size:5.6px;line-height:7px;font-weight:bold;color:#31211f">網</div>
<div class="a" style="left:208.4px;top:235.6px;width:8px;text-align:center;font-size:5.6px;line-height:7px;font-weight:bold;color:#31211f">格</div>
<div class="a" style="left:61.3px;top:266.4px;width:105.5px;height:75.5px;background:#fdf5f2"></div>
<div class="a" style="left:61.3px;top:344.4px;width:105.5px;height:75.5px;background:#fdf5f2"></div>
<div class="a" style="left:61.3px;top:422.4px;width:105.5px;height:75.5px;background:#fdf5f2"></div>
<div class="a" style="left:61.3px;top:500.4px;width:105.5px;height:75.7px;background:#fdf5f2"></div>
<div class="a" style="left:172.4px;top:266.4px;width:106.4px;height:75.5px;background:#fdf5f2"></div>
<div class="a" style="left:172.4px;top:344.4px;width:106.4px;height:75.5px;background:#fdf5f2"></div>
<div class="a" style="left:172.4px;top:422.4px;width:106.4px;height:75.5px;background:#fdf5f2"></div>
<div class="a" style="left:172.4px;top:500.4px;width:106.4px;height:75.7px;background:#fdf5f2"></div>
<svg class="a" style="left:71.5px;top:285px" width="9" height="9" viewBox="0 0 9 9"><path d="M4.2 0.8L6.6 3.2L4.2 5.6L1.8 3.2ZM5.4 3.4L7.4 5.4L5.4 7.4L3.4 5.4Z" fill="none" stroke="#777" stroke-width="0.45"/></svg>
<div class="a" style="left:70.60px;top:293.24px;width:91.20px;height:20.16px;font-size:16.80px;line-height:20.16px;color:#3a3a3a;font-weight:bold;white-space:nowrap;text-align:left;letter-spacing:0.00px;transform:scale(0.1250);transform-origin:0 0">Idearts.cn</div>
<div class="a" style="left:70.60px;top:303.86px;width:172.80px;height:18.24px;font-size:15.20px;line-height:18.24px;color:#8a8a8a;font-weight:normal;white-space:nowrap;text-align:left;letter-spacing:0.00px;transform:scale(0.1250);transform-origin:0 0">Creando Synthesis Design</div>
<div class="a" style="left:70.60px;top:306.50px;width:75.20px;height:14.40px;font-size:12.00px;line-height:14.40px;color:#3a3a3a;font-weight:bold;white-space:nowrap;text-align:left;letter-spacing:0.00px;transform:scale(0.1250);transform-origin:0 0">Research Institute</div>
<div class="a" style="left:70.60px;top:308.50px;width:83.20px;height:14.40px;font-size:12.00px;line-height:14.40px;color:#3a3a3a;font-weight:bold;white-space:nowrap;text-align:left;letter-spacing:0.00px;transform:scale(0.1250);transform-origin:0 0">www.creando.org</div>
<div class="a" style="left:70.60px;top:318.06px;width:86.40px;height:18.24px;font-size:15.20px;line-height:18.24px;color:#8a8a8a;font-weight:normal;white-space:nowrap;text-align:left;letter-spacing:0.00px;transform:scale(0.1250);transform-origin:0 0">2012.04.15</div>
<div class="a" style="left:70.60px;top:320.40px;width:155.20px;height:14.40px;font-size:12.00px;line-height:14.40px;color:#3a3a3a;font-weight:bold;white-space:nowrap;text-align:left;letter-spacing:0.00px;transform:scale(0.1250);transform-origin:0 0">Golden Section Universal Grid</div>
<div class="a" style="left:70.60px;top:322.50px;width:62.40px;height:14.40px;font-size:12.00px;line-height:14.40px;color:#3a3a3a;font-weight:bold;white-space:nowrap;text-align:left;letter-spacing:0.00px;transform:scale(0.1250);transform-origin:0 0">Share Edition</div>
<div class="v" style="left:114.28px;top:277.60px;width:16.00px;font-size:16.00px;line-height:16.00px;color:#3a3a3a;font-weight:bold;letter-spacing:0.00px;transform:scale(0.1250);transform-origin:0 0">职业，更是一</div>
<div class="v" style="left:119.38px;top:277.60px;width:16.00px;font-size:16.00px;line-height:16.00px;color:#3a3a3a;font-weight:normal;letter-spacing:0.00px;transform:scale(0.1250);transform-origin:0 0">种信仰。当我们谈论设</div>
<div class="v" style="left:100.48px;top:308.00px;width:16.00px;font-size:16.00px;line-height:16.00px;color:#3a3a3a;font-weight:bold;letter-spacing:0.00px;transform:scale(0.1250);transform-origin:0 0">计的时候，其实是</div>
<div class="v" style="left:90.58px;top:355.60px;width:16.00px;font-size:16.00px;line-height:16.00px;color:#3a3a3a;font-weight:normal;letter-spacing:0.00px;transform:scale(0.1250);transform-origin:0 0">在谈论如何看待世界</div>
<div class="v" style="left:94.38px;top:355.60px;width:16.00px;font-size:16.00px;line-height:16.00px;color:#3a3a3a;font-weight:normal;letter-spacing:0.00px;transform:scale(0.1250);transform-origin:0 0">与自己。在商业与艺</div>
<div class="v" style="left:98.28px;top:355.60px;width:16.00px;font-size:16.00px;line-height:16.00px;color:#3a3a3a;font-weight:normal;letter-spacing:0.00px;transform:scale(0.1250);transform-origin:0 0">术之间，设计师需要</div>
<div class="v" style="left:102.08px;top:355.60px;width:16.00px;font-size:16.00px;line-height:16.00px;color:#3a3a3a;font-weight:normal;letter-spacing:0.00px;transform:scale(0.1250);transform-origin:0 0">保持清醒的判断、持</div>
<div class="v" style="left:105.88px;top:355.60px;width:16.00px;font-size:16.00px;line-height:16.00px;color:#3a3a3a;font-weight:normal;letter-spacing:0.00px;transform:scale(0.1250);transform-origin:0 0">久的热情，用专业的</div>
<div class="v" style="left:109.68px;top:355.60px;width:16.00px;font-size:16.00px;line-height:16.00px;color:#3a3a3a;font-weight:normal;letter-spacing:0.00px;transform:scale(0.1250);transform-origin:0 0">力量去回应时代的问</div>
<div class="v" style="left:113.48px;top:355.60px;width:16.00px;font-size:16.00px;line-height:16.00px;color:#3a3a3a;font-weight:normal;letter-spacing:0.00px;transform:scale(0.1250);transform-origin:0 0">题。本书以对谈的形</div>
<div class="v" style="left:121.08px;top:355.60px;width:16.00px;font-size:16.00px;line-height:16.00px;color:#3a3a3a;font-weight:normal;letter-spacing:0.00px;transform:scale(0.1250);transform-origin:0 0">式，记录三位设计人</div>
<div class="v" style="left:124.88px;top:355.60px;width:16.00px;font-size:16.00px;line-height:16.00px;color:#3a3a3a;font-weight:normal;letter-spacing:0.00px;transform:scale(0.1250);transform-origin:0 0">多年的思考与实践：</div>
<div class="v" style="left:105.25px;top:386.00px;width:13.60px;font-size:13.60px;line-height:13.60px;color:#222;font-weight:900;letter-spacing:0.00px;transform:scale(0.1250);transform-origin:0 0">从品牌到书籍，从方法到态度</div>
<div class="v" style="left:102.66px;top:391.50px;width:12.00px;font-size:12.00px;line-height:12.00px;color:#777;font-weight:normal;letter-spacing:0.00px;transform:scale(0.1250);transform-origin:0 0">，坦诚而深入。</div>
<div class="v" style="left:140.24px;top:382.30px;width:28.00px;font-size:28.00px;line-height:28.00px;color:#4a4a4a;font-weight:bold;letter-spacing:9.60px;transform:scale(0.1250);transform-origin:0 0;font-family:'Liberation Serif','Noto Serif CJK SC',serif">出发</div>
<div class="a" style="left:126.00px;top:393.98px;width:264.00px;height:30.72px;font-size:25.60px;line-height:30.72px;color:#3c3c3c;font-weight:bold;white-space:nowrap;text-align:center;letter-spacing:-0.40px;transform:scale(0.1250);transform-origin:0 0">Sunday, April 15, 2012</div>
<div class="a" style="left:130.00px;top:399.00px;width:203.20px;height:14.40px;font-size:12.00px;line-height:14.40px;color:#666;font-weight:normal;white-space:nowrap;text-align:center;letter-spacing:0.00px;transform:scale(0.1250);transform-origin:0 0">Creando Synthesis Design Research</div>
<div class="a" style="left:136.00px;top:401.10px;width:107.20px;height:14.40px;font-size:12.00px;line-height:14.40px;color:#666;font-weight:normal;white-space:nowrap;text-align:center;letter-spacing:0.00px;transform:scale(0.1250);transform-origin:0 0">Institute</div>
<div class="a" style="left:70.20px;top:414.56px;width:65.60px;height:13.44px;font-size:11.20px;line-height:13.44px;color:#222;font-weight:bold;white-space:nowrap;text-align:left;letter-spacing:0.00px;transform:scale(0.1250);transform-origin:0 0">CREANDO</div>
<div class="a" style="left:79.40px;top:414.56px;width:132.80px;height:13.44px;font-size:11.20px;line-height:13.44px;color:#555;font-weight:normal;white-space:nowrap;text-align:left;letter-spacing:0.00px;transform:scale(0.1250);transform-origin:0 0">Synthesis Design Research</div>
<div class="a" style="left:96.80px;top:414.56px;width:70.40px;height:13.44px;font-size:11.20px;line-height:13.44px;color:#222;font-weight:bold;white-space:nowrap;text-align:left;letter-spacing:0.00px;transform:scale(0.1250);transform-origin:0 0">Institute</div>
<div class="a" style="left:92.20px;top:429.60px;width:3px;height:3px;border-radius:1.5px;background:#d8353f"></div>
<div class="a" style="left:150.10px;top:452.70px;width:3px;height:3px;border-radius:1.5px;background:#d8353f"></div>
<div class="a" style="left:101.20px;top:463.60px;width:3px;height:3px;border-radius:1.5px;background:#d8353f"></div>
<div class="a" style="left:157.70px;top:463.80px;width:3px;height:3px;border-radius:1.5px;background:#d8353f"></div>
<div class="v" style="left:88.22px;top:429.50px;width:16.80px;font-size:16.80px;line-height:16.80px;color:#333;font-weight:bold;letter-spacing:0.00px;transform:scale(0.1250);transform-origin:0 0">好的设计来自对生活的</div>
<div class="v" style="left:84.59px;top:433.60px;width:14.40px;font-size:14.40px;line-height:14.40px;color:#555;font-weight:normal;letter-spacing:0.00px;transform:scale(0.1250);transform-origin:0 0">观察，来自对细节的坚</div>
<div class="v" style="left:114.84px;top:426.80px;width:28.00px;font-size:28.00px;line-height:28.00px;color:#444;font-weight:bold;letter-spacing:9.60px;transform:scale(0.1250);transform-origin:0 0;font-family:'Liberation Serif','Noto Serif CJK SC',serif">三空</div>
<div class="v" style="left:110.79px;top:433.60px;width:14.40px;font-size:14.40px;line-height:14.40px;color:#555;font-weight:normal;letter-spacing:0.00px;transform:scale(0.1250);transform-origin:0 0">持，也来自对人的尊重。这是</div>
<div class="a" style="left:114.90px;top:437.70px;width:72.80px;height:14.40px;font-size:12.00px;line-height:14.40px;color:#555;font-weight:normal;white-space:nowrap;text-align:left;letter-spacing:0.00px;transform:scale(0.1250);transform-origin:0 0">Three kinds of</div>
<div class="a" style="left:114.90px;top:439.70px;width:93.60px;height:14.40px;font-size:12.00px;line-height:14.40px;color:#555;font-weight:normal;white-space:nowrap;text-align:left;letter-spacing:0.00px;transform:scale(0.1250);transform-origin:0 0">emptiness in layout</div>
<div class="a" style="left:114.90px;top:441.80px;width:64.80px;height:14.40px;font-size:12.00px;line-height:14.40px;color:#555;font-weight:normal;white-space:nowrap;text-align:left;letter-spacing:0.00px;transform:scale(0.1250);transform-origin:0 0">and design</div>
<div class="v" style="left:146.02px;top:452.50px;width:16.80px;font-size:16.80px;line-height:16.80px;color:#333;font-weight:bold;letter-spacing:0.00px;transform:scale(0.1250);transform-origin:0 0">职业的底线，也是</div>
<div class="v" style="left:142.39px;top:457.00px;width:14.40px;font-size:14.40px;line-height:14.40px;color:#555;font-weight:normal;letter-spacing:0.00px;transform:scale(0.1250);transform-origin:0 0">力量所在。万能黄金分</div>
<div class="v" style="left:153.52px;top:463.40px;width:16.80px;font-size:16.80px;line-height:16.80px;color:#333;font-weight:bold;letter-spacing:0.00px;transform:scale(0.1250);transform-origin:0 0">割网格是一种版面构成</div>
<div class="v" style="left:149.99px;top:467.40px;width:14.40px;font-size:14.40px;line-height:14.40px;color:#555;font-weight:normal;letter-spacing:0.00px;transform:scale(0.1250);transform-origin:0 0">工具，它以黄金比例为</div>
<div class="v" style="left:97.32px;top:463.40px;width:16.80px;font-size:16.80px;line-height:16.80px;color:#333;font-weight:bold;letter-spacing:0.00px;transform:scale(0.1250);transform-origin:0 0">基础，层层嵌</div>
<div class="v" style="left:93.69px;top:467.40px;width:14.40px;font-size:14.40px;line-height:14.40px;color:#555;font-weight:normal;letter-spacing:0.00px;transform:scale(0.1250);transform-origin:0 0">套，帮助设计师快速建</div>
<svg class="a" style="left:116.80px;top:458px" width="26" height="37" viewBox="0 0 26 37"><defs><linearGradient id="g30" x1="0" y1="0" x2="0" y2="1"><stop offset="0" stop-color="#cfc9c6"/><stop offset="0.5" stop-color="#b1afb0"/><stop offset="1" stop-color="#8f9094"/></linearGradient></defs><circle cx="13" cy="23.7" r="11.1" fill="#dce1e6" stroke="#d2d7dc" stroke-width="0.3"/><circle cx="13" cy="12.8" r="11.1" fill="url(#g30)"/><path d="M4 14C6.5 11.8 19.5 11.6 22 13.4C20 16.6 7 17 4 14Z" fill="#15161c"/></svg>
<div class="a" style="left:66.80px;top:492.56px;width:60.80px;height:13.44px;font-size:11.20px;line-height:13.44px;color:#222;font-weight:bold;white-space:nowrap;text-align:left;letter-spacing:0.00px;transform:scale(0.1250);transform-origin:0 0">CREANDO</div>
<div class="a" style="left:75.40px;top:492.56px;width:136.00px;height:13.44px;font-size:11.20px;line-height:13.44px;color:#555;font-weight:normal;white-space:nowrap;text-align:left;letter-spacing:0.00px;transform:scale(0.1250);transform-origin:0 0">Synthesis Design Research</div>
<div class="a" style="left:93.20px;top:492.56px;width:72.00px;height:13.44px;font-size:11.20px;line-height:13.44px;color:#222;font-weight:bold;white-space:nowrap;text-align:left;letter-spacing:0.00px;transform:scale(0.1250);transform-origin:0 0">Institute</div>
<div class="v" style="left:124.83px;top:518.30px;width:29.60px;font-size:29.60px;line-height:29.60px;color:#444;font-weight:bold;letter-spacing:9.60px;transform:scale(0.1250);transform-origin:0 0;font-family:'Liberation Serif','Noto Serif CJK SC',serif">明天</div>
<svg class="a" style="left:92.20px;top:544px" width="17" height="17" viewBox="0 0 17 17"><defs><linearGradient id="g400" x1="0" y1="0" x2="0" y2="1"><stop offset="0" stop-color="#c4c6c6"/><stop offset="0.45" stop-color="#d2d3d3"/><stop offset="0.6" stop-color="#f4f4f4"/><stop offset="0.66" stop-color="#3c3c3c"/><stop offset="0.78" stop-color="#777"/><stop offset="1" stop-color="#c8c8c8"/></linearGradient></defs><circle cx="8.5" cy="8.5" r="8.1" fill="url(#g400)"/></svg>
<svg class="a" style="left:127.70px;top:544px" width="17" height="17" viewBox="0 0 17 17"><defs><linearGradient id="g401" x1="0" y1="0" x2="0" y2="1"><stop offset="0" stop-color="#c4c6c6"/><stop offset="0.45" stop-color="#d2d3d3"/><stop offset="0.6" stop-color="#f4f4f4"/><stop offset="0.66" stop-color="#3c3c3c"/><stop offset="0.78" stop-color="#777"/><stop offset="1" stop-color="#c8c8c8"/></linearGradient></defs><circle cx="8.5" cy="8.5" r="8.1" fill="url(#g401)"/></svg>
<div class="v" style="left:114.58px;top:540.00px;width:16.00px;font-size:16.00px;line-height:16.00px;color:#333;font-weight:bold;letter-spacing:0.00px;transform:scale(0.1250);transform-origin:0 0">立秩序。留白并</div>
<div class="v" style="left:111.50px;top:543.40px;width:12.80px;font-size:12.80px;line-height:12.80px;color:#555;font-weight:normal;letter-spacing:0.00px;transform:scale(0.1250);transform-origin:0 0">非空无一物</div>
<div class="v" style="left:149.88px;top:538.70px;width:16.00px;font-size:16.00px;line-height:16.00px;color:#333;font-weight:bold;letter-spacing:0.00px;transform:scale(0.1250);transform-origin:0 0">，而是让内容得以</div>
<div class="v" style="left:146.70px;top:543.40px;width:12.80px;font-size:12.80px;line-height:12.80px;color:#555;font-weight:normal;letter-spacing:0.00px;transform:scale(0.1250);transform-origin:0 0">呼吸的空间</div>
<div class="a" style="left:123.60px;top:568.26px;width:51.20px;height:13.44px;font-size:11.20px;line-height:13.44px;color:#999;font-weight:normal;white-space:nowrap;text-align:center;letter-spacing:0.00px;transform:scale(0.1250);transform-origin:0 0">2012.04</div>
<div class="a" style="left:109.50px;top:570.56px;width:60.00px;height:13.44px;font-size:11.20px;line-height:13.44px;color:#222;font-weight:bold;white-space:nowrap;text-align:left;letter-spacing:0.00px;transform:scale(0.1250);transform-origin:0 0">CREANDO</div>
<div class="a" style="left:118.00px;top:570.56px;width:136.00px;height:13.44px;font-size:11.20px;line-height:13.44px;color:#555;font-weight:normal;white-space:nowrap;text-align:left;letter-spacing:0.00px;transform:scale(0.1250);transform-origin:0 0">Synthesis Design Research</div>
<div class="a" style="left:135.80px;top:570.56px;width:72.00px;height:13.44px;font-size:11.20px;line-height:13.44px;color:#222;font-weight:bold;white-space:nowrap;text-align:left;letter-spacing:0.00px;transform:scale(0.1250);transform-origin:0 0">Institute</div>
<svg class="a" style="left:182.6px;top:285px" width="9" height="9" viewBox="0 0 9 9"><path d="M4.2 0.8L6.6 3.2L4.2 5.6L1.8 3.2ZM5.4 3.4L7.4 5.4L5.4 7.4L3.4 5.4Z" fill="none" stroke="#777" stroke-width="0.45"/></svg>
<div class="a" style="left:181.70px;top:293.24px;width:-797.60px;height:20.16px;font-size:16.80px;line-height:20.16px;color:#3a3a3a;font-weight:bold;white-space:nowrap;text-align:left;letter-spacing:0.00px;transform:scale(0.1250);transform-origin:0 0">Idearts.cn</div>
<div class="a" style="left:181.70px;top:303.86px;width:-716.00px;height:18.24px;font-size:15.20px;line-height:18.24px;color:#8a8a8a;font-weight:normal;white-space:nowrap;text-align:left;letter-spacing:0.00px;transform:scale(0.1250);transform-origin:0 0">Creando Synthesis Design</div>
<div class="a" style="left:181.70px;top:306.50px;width:-813.60px;height:14.40px;font-size:12.00px;line-height:14.40px;color:#3a3a3a;font-weight:bold;white-space:nowrap;text-align:left;letter-spacing:0.00px;transform:scale(0.1250);transform-origin:0 0">Research Institute</div>
<div class="a" style="left:181.70px;top:308.50px;width:-805.60px;height:14.40px;font-size:12.00px;line-height:14.40px;color:#3a3a3a;font-weight:bold;white-space:nowrap;text-align:left;letter-spacing:0.00px;transform:scale(0.1250);transform-origin:0 0">www.creando.org</div>
<div class="a" style="left:181.70px;top:318.06px;width:-802.40px;height:18.24px;font-size:15.20px;line-height:18.24px;color:#8a8a8a;font-weight:normal;white-space:nowrap;text-align:left;letter-spacing:0.00px;transform:scale(0.1250);transform-origin:0 0">2012.04.15</div>
<div class="a" style="left:181.70px;top:320.40px;width:-733.60px;height:14.40px;font-size:12.00px;line-height:14.40px;color:#3a3a3a;font-weight:bold;white-space:nowrap;text-align:left;letter-spacing:0.00px;transform:scale(0.1250);transform-origin:0 0">Golden Section Universal Grid</div>
<div class="a" style="left:181.70px;top:322.50px;width:-826.40px;height:14.40px;font-size:12.00px;line-height:14.40px;color:#3a3a3a;font-weight:bold;white-space:nowrap;text-align:left;letter-spacing:0.00px;transform:scale(0.1250);transform-origin:0 0">Share Edition</div>
<div class="v" style="left:225.38px;top:277.60px;width:16.00px;font-size:16.00px;line-height:16.00px;color:#3a3a3a;font-weight:bold;letter-spacing:0.00px;transform:scale(0.1250);transform-origin:0 0">职业，更是一</div>
<div class="v" style="left:230.48px;top:277.60px;width:16.00px;font-size:16.00px;line-height:16.00px;color:#3a3a3a;font-weight:normal;letter-spacing:0.00px;transform:scale(0.1250);transform-origin:0 0">种信仰。当我们谈论设</div>
<div class="v" style="left:211.58px;top:308.00px;width:16.00px;font-size:16.00px;line-height:16.00px;color:#3a3a3a;font-weight:bold;letter-spacing:0.00px;transform:scale(0.1250);transform-origin:0 0">计的时候，其实是</div>
<div class="v" style="left:201.68px;top:355.60px;width:16.00px;font-size:16.00px;line-height:16.00px;color:#3a3a3a;font-weight:normal;letter-spacing:0.00px;transform:scale(0.1250);transform-origin:0 0">在谈论如何看待世界</div>
<div class="v" style="left:205.48px;top:355.60px;width:16.00px;font-size:16.00px;line-height:16.00px;color:#3a3a3a;font-weight:normal;letter-spacing:0.00px;transform:scale(0.1250);transform-origin:0 0">与自己。在商业与艺</div>
<div class="v" style="left:209.38px;top:355.60px;width:16.00px;font-size:16.00px;line-height:16.00px;color:#3a3a3a;font-weight:normal;letter-spacing:0.00px;transform:scale(0.1250);transform-origin:0 0">术之间，设计师需要</div>
<div class="v" style="left:213.18px;top:355.60px;width:16.00px;font-size:16.00px;line-height:16.00px;color:#3a3a3a;font-weight:normal;letter-spacing:0.00px;transform:scale(0.1250);transform-origin:0 0">保持清醒的判断、持</div>
<div class="v" style="left:216.98px;top:355.60px;width:16.00px;font-size:16.00px;line-height:16.00px;color:#3a3a3a;font-weight:normal;letter-spacing:0.00px;transform:scale(0.1250);transform-origin:0 0">久的热情，用专业的</div>
<div class="v" style="left:220.78px;top:355.60px;width:16.00px;font-size:16.00px;line-height:16.00px;color:#3a3a3a;font-weight:normal;letter-spacing:0.00px;transform:scale(0.1250);transform-origin:0 0">力量去回应时代的问</div>
<div class="v" style="left:224.58px;top:355.60px;width:16.00px;font-size:16.00px;line-height:16.00px;color:#3a3a3a;font-weight:normal;letter-spacing:0.00px;transform:scale(0.1250);transform-origin:0 0">题。本书以对谈的形</div>
<div class="v" style="left:232.18px;top:355.60px;width:16.00px;font-size:16.00px;line-height:16.00px;color:#3a3a3a;font-weight:normal;letter-spacing:0.00px;transform:scale(0.1250);transform-origin:0 0">式，记录三位设计人</div>
<div class="v" style="left:235.98px;top:355.60px;width:16.00px;font-size:16.00px;line-height:16.00px;color:#3a3a3a;font-weight:normal;letter-spacing:0.00px;transform:scale(0.1250);transform-origin:0 0">多年的思考与实践：</div>
<div class="v" style="left:216.35px;top:386.00px;width:13.60px;font-size:13.60px;line-height:13.60px;color:#222;font-weight:900;letter-spacing:0.00px;transform:scale(0.1250);transform-origin:0 0">从品牌到书籍，从方法到态度</div>
<div class="v" style="left:213.76px;top:391.50px;width:12.00px;font-size:12.00px;line-height:12.00px;color:#777;font-weight:normal;letter-spacing:0.00px;transform:scale(0.1250);transform-origin:0 0">，坦诚而深入。</div>
<div class="v" style="left:251.34px;top:382.30px;width:28.00px;font-size:28.00px;line-height:28.00px;color:#4a4a4a;font-weight:bold;letter-spacing:9.60px;transform:scale(0.1250);transform-origin:0 0;font-family:'Liberation Serif','Noto Serif CJK SC',serif">出发</div>
<div class="a" style="left:237.10px;top:393.98px;width:-624.80px;height:30.72px;font-size:25.60px;line-height:30.72px;color:#3c3c3c;font-weight:bold;white-space:nowrap;text-align:center;letter-spacing:-0.40px;transform:scale(0.1250);transform-origin:0 0">Sunday, April 15, 2012</div>
<div class="a" style="left:241.10px;top:399.00px;width:-685.60px;height:14.40px;font-size:12.00px;line-height:14.40px;color:#666;font-weight:normal;white-space:nowrap;text-align:center;letter-spacing:0.00px;transform:scale(0.1250);transform-origin:0 0">Creando Synthesis Design Research</div>
<div class="a" style="left:247.10px;top:401.10px;width:-781.60px;height:14.40px;font-size:12.00px;line-height:14.40px;color:#666;font-weight:normal;white-space:nowrap;text-align:center;letter-spacing:0.00px;transform:scale(0.1250);transform-origin:0 0">Institute</div>
<div class="a" style="left:181.30px;top:414.56px;width:-823.20px;height:13.44px;font-size:11.20px;line-height:13.44px;color:#222;font-weight:bold;white-space:nowrap;text-align:left;letter-spacing:0.00px;transform:scale(0.1250);transform-origin:0 0">CREANDO</div>
<div class="a" style="left:190.50px;top:414.56px;width:-756.00px;height:13.44px;font-size:11.20px;line-height:13.44px;color:#555;font-weight:normal;white-space:nowrap;text-align:left;letter-spacing:0.00px;transform:scale(0.1250);transform-origin:0 0">Synthesis Design Research</div>
<div class="a" style="left:207.90px;top:414.56px;width:-818.40px;height:13.44px;font-size:11.20px;line-height:13.44px;color:#222;font-weight:bold;white-space:nowrap;text-align:left;letter-spacing:0.00px;transform:scale(0.1250);transform-origin:0 0">Institute</div>
<div class="a" style="left:203.30px;top:429.60px;width:3px;height:3px;border-radius:1.5px;background:#d8353f"></div>
<div class="a" style="left:261.20px;top:452.70px;width:3px;height:3px;border-radius:1.5px;background:#d8353f"></div>
<div class="a" style="left:212.30px;top:463.60px;width:3px;height:3px;border-radius:1.5px;background:#d8353f"></div>
<div class="a" style="left:268.80px;top:463.80px;width:3px;height:3px;border-radius:1.5px;background:#d8353f"></div>
<div class="v" style="left:199.32px;top:429.50px;width:16.80px;font-size:16.80px;line-height:16.80px;color:#333;font-weight:bold;letter-spacing:0.00px;transform:scale(0.1250);transform-origin:0 0">好的设计来自对生活的</div>
<div class="v" style="left:195.69px;top:433.60px;width:14.40px;font-size:14.40px;line-height:14.40px;color:#555;font-weight:normal;letter-spacing:0.00px;transform:scale(0.1250);transform-origin:0 0">观察，来自对细节的坚</div>
<div class="v" style="left:225.94px;top:426.80px;width:28.00px;font-size:28.00px;line-height:28.00px;color:#444;font-weight:bold;letter-spacing:9.60px;transform:scale(0.1250);transform-origin:0 0;font-family:'Liberation Serif','Noto Serif CJK SC',serif">三空</div>
<div class="v" style="left:221.89px;top:433.60px;width:14.40px;font-size:14.40px;line-height:14.40px;color:#555;font-weight:normal;letter-spacing:0.00px;transform:scale(0.1250);transform-origin:0 0">持，也来自对人的尊重。这是</div>
<div class="a" style="left:226.00px;top:437.70px;width:-816.00px;height:14.40px;font-size:12.00px;line-height:14.40px;color:#555;font-weight:normal;white-space:nowrap;text-align:left;letter-spacing:0.00px;transform:scale(0.1250);transform-origin:0 0">Three kinds of</div>
<div class="a" style="left:226.00px;top:439.70px;width:-795.20px;height:14.40px;font-size:12.00px;line-height:14.40px;color:#555;font-weight:normal;white-space:nowrap;text-align:left;letter-spacing:0.00px;transform:scale(0.1250);transform-origin:0 0">emptiness in layout</div>
<div class="a" style="left:226.00px;top:441.80px;width:-824.00px;height:14.40px;font-size:12.00px;line-height:14.40px;color:#555;font-weight:normal;white-space:nowrap;text-align:left;letter-spacing:0.00px;transform:scale(0.1250);transform-origin:0 0">and design</div>
<div class="v" style="left:257.12px;top:452.50px;width:16.80px;font-size:16.80px;line-height:16.80px;color:#333;font-weight:bold;letter-spacing:0.00px;transform:scale(0.1250);transform-origin:0 0">职业的底线，也是</div>
<div class="v" style="left:253.49px;top:457.00px;width:14.40px;font-size:14.40px;line-height:14.40px;color:#555;font-weight:normal;letter-spacing:0.00px;transform:scale(0.1250);transform-origin:0 0">力量所在。万能黄金分</div>
<div class="v" style="left:264.62px;top:463.40px;width:16.80px;font-size:16.80px;line-height:16.80px;color:#333;font-weight:bold;letter-spacing:0.00px;transform:scale(0.1250);transform-origin:0 0">割网格是一种版面构成</div>
<div class="v" style="left:261.09px;top:467.40px;width:14.40px;font-size:14.40px;line-height:14.40px;color:#555;font-weight:normal;letter-spacing:0.00px;transform:scale(0.1250);transform-origin:0 0">工具，它以黄金比例为</div>
<div class="v" style="left:208.42px;top:463.40px;width:16.80px;font-size:16.80px;line-height:16.80px;color:#333;font-weight:bold;letter-spacing:0.00px;transform:scale(0.1250);transform-origin:0 0">基础，层层嵌</div>
<div class="v" style="left:204.79px;top:467.40px;width:14.40px;font-size:14.40px;line-height:14.40px;color:#555;font-weight:normal;letter-spacing:0.00px;transform:scale(0.1250);transform-origin:0 0">套，帮助设计师快速建</div>
<svg class="a" style="left:227.90px;top:458px" width="26" height="37" viewBox="0 0 26 37"><defs><linearGradient id="g3111" x1="0" y1="0" x2="0" y2="1"><stop offset="0" stop-color="#cfc9c6"/><stop offset="0.5" stop-color="#b1afb0"/><stop offset="1" stop-color="#8f9094"/></linearGradient></defs><circle cx="13" cy="23.7" r="11.1" fill="#dce1e6" stroke="#d2d7dc" stroke-width="0.3"/><circle cx="13" cy="12.8" r="11.1" fill="url(#g3111)"/><path d="M4 14C6.5 11.8 19.5 11.6 22 13.4C20 16.6 7 17 4 14Z" fill="#15161c"/></svg>
<div class="a" style="left:177.90px;top:492.56px;width:-828.00px;height:13.44px;font-size:11.20px;line-height:13.44px;color:#222;font-weight:bold;white-space:nowrap;text-align:left;letter-spacing:0.00px;transform:scale(0.1250);transform-origin:0 0">CREANDO</div>
<div class="a" style="left:186.50px;top:492.56px;width:-752.80px;height:13.44px;font-size:11.20px;line-height:13.44px;color:#555;font-weight:normal;white-space:nowrap;text-align:left;letter-spacing:0.00px;transform:scale(0.1250);transform-origin:0 0">Synthesis Design Research</div>
<div class="a" style="left:204.30px;top:492.56px;width:-816.80px;height:13.44px;font-size:11.20px;line-height:13.44px;color:#222;font-weight:bold;white-space:nowrap;text-align:left;letter-spacing:0.00px;transform:scale(0.1250);transform-origin:0 0">Institute</div>
<div class="v" style="left:235.93px;top:518.30px;width:29.60px;font-size:29.60px;line-height:29.60px;color:#444;font-weight:bold;letter-spacing:9.60px;transform:scale(0.1250);transform-origin:0 0;font-family:'Liberation Serif','Noto Serif CJK SC',serif">明天</div>
<svg class="a" style="left:203.30px;top:544px" width="17" height="17" viewBox="0 0 17 17"><defs><linearGradient id="g41110" x1="0" y1="0" x2="0" y2="1"><stop offset="0" stop-color="#c4c6c6"/><stop offset="0.45" stop-color="#d2d3d3"/><stop offset="0.6" stop-color="#f4f4f4"/><stop offset="0.66" stop-color="#3c3c3c"/><stop offset="0.78" stop-color="#777"/><stop offset="1" stop-color="#c8c8c8"/></linearGradient></defs><circle cx="8.5" cy="8.5" r="8.1" fill="url(#g41110)"/></svg>
<svg class="a" style="left:238.80px;top:544px" width="17" height="17" viewBox="0 0 17 17"><defs><linearGradient id="g41111" x1="0" y1="0" x2="0" y2="1"><stop offset="0" stop-color="#c4c6c6"/><stop offset="0.45" stop-color="#d2d3d3"/><stop offset="0.6" stop-color="#f4f4f4"/><stop offset="0.66" stop-color="#3c3c3c"/><stop offset="0.78" stop-color="#777"/><stop offset="1" stop-color="#c8c8c8"/></linearGradient></defs><circle cx="8.5" cy="8.5" r="8.1" fill="url(#g41111)"/></svg>
<div class="v" style="left:225.68px;top:540.00px;width:16.00px;font-size:16.00px;line-height:16.00px;color:#333;font-weight:bold;letter-spacing:0.00px;transform:scale(0.1250);transform-origin:0 0">立秩序。留白并</div>
<div class="v" style="left:222.60px;top:543.40px;width:12.80px;font-size:12.80px;line-height:12.80px;color:#555;font-weight:normal;letter-spacing:0.00px;transform:scale(0.1250);transform-origin:0 0">非空无一物</div>
<div class="v" style="left:260.98px;top:538.70px;width:16.00px;font-size:16.00px;line-height:16.00px;color:#333;font-weight:bold;letter-spacing:0.00px;transform:scale(0.1250);transform-origin:0 0">，而是让内容得以</div>
<div class="v" style="left:257.80px;top:543.40px;width:12.80px;font-size:12.80px;line-height:12.80px;color:#555;font-weight:normal;letter-spacing:0.00px;transform:scale(0.1250);transform-origin:0 0">呼吸的空间</div>
<div class="a" style="left:234.70px;top:568.26px;width:-837.60px;height:13.44px;font-size:11.20px;line-height:13.44px;color:#999;font-weight:normal;white-space:nowrap;text-align:center;letter-spacing:0.00px;transform:scale(0.1250);transform-origin:0 0">2012.04</div>
<div class="a" style="left:220.60px;top:570.56px;width:-828.80px;height:13.44px;font-size:11.20px;line-height:13.44px;color:#222;font-weight:bold;white-space:nowrap;text-align:left;letter-spacing:0.00px;transform:scale(0.1250);transform-origin:0 0">CREANDO</div>
<div class="a" style="left:229.10px;top:570.56px;width:-752.80px;height:13.44px;font-size:11.20px;line-height:13.44px;color:#555;font-weight:normal;white-space:nowrap;text-align:left;letter-spacing:0.00px;transform:scale(0.1250);transform-origin:0 0">Synthesis Design Research</div>
<div class="a" style="left:246.90px;top:570.56px;width:-816.80px;height:13.44px;font-size:11.20px;line-height:13.44px;color:#222;font-weight:bold;white-space:nowrap;text-align:left;letter-spacing:0.00px;transform:scale(0.1250);transform-origin:0 0">Institute</div>
<svg class="a" style="left:170px;top:262px" width="114" height="320" viewBox="170 262 114 320"><rect x="177.4" y="270.4" width="95.5" height="67.4" fill="none" stroke="#c2c4c3" stroke-width="0.5"/><rect x="181.2" y="273.4" width="88.3" height="62.0" fill="none" stroke="#c2c4c3" stroke-width="0.5"/><rect x="187.3" y="277.5" width="76.1" height="53.7" fill="none" stroke="#c2c4c3" stroke-width="0.5"/><rect x="197.3" y="284.2" width="56.2" height="40.0" fill="none" stroke="#c2c4c3" stroke-width="0.5"/><rect x="212.4" y="295.4" width="26.2" height="18.0" fill="none" stroke="#c2c4c3" stroke-width="0.5"/><rect x="172.4" y="266.4" width="106.4" height="76.1" fill="none" stroke="#62b0ba" stroke-width="0.7"/><path d="M225.2 266.4V342.5M172.4 304.3H278.8" stroke="#62b0ba" stroke-width="0.6" fill="none"/><rect x="177.4" y="348.4" width="95.5" height="67.4" fill="none" stroke="#c2c4c3" stroke-width="0.5"/><rect x="181.2" y="351.4" width="88.3" height="62.0" fill="none" stroke="#c2c4c3" stroke-width="0.5"/><rect x="187.3" y="355.5" width="76.1" height="53.7" fill="none" stroke="#c2c4c3" stroke-width="0.5"/><rect x="197.3" y="362.2" width="56.2" height="40.0" fill="none" stroke="#c2c4c3" stroke-width="0.5"/><rect x="212.4" y="373.4" width="26.2" height="18.0" fill="none" stroke="#c2c4c3" stroke-width="0.5"/><rect x="172.4" y="344.4" width="106.4" height="76.1" fill="none" stroke="#62b0ba" stroke-width="0.7"/><path d="M225.2 344.4V420.5M172.4 382.3H278.8" stroke="#62b0ba" stroke-width="0.6" fill="none"/><rect x="177.4" y="426.4" width="95.5" height="67.4" fill="none" stroke="#c2c4c3" stroke-width="0.5"/><rect x="181.2" y="429.4" width="88.3" height="62.0" fill="none" stroke="#c2c4c3" stroke-width="0.5"/><rect x="187.3" y="433.5" width="76.1" height="53.7" fill="none" stroke="#c2c4c3" stroke-width="0.5"/><rect x="197.3" y="440.2" width="56.2" height="40.0" fill="none" stroke="#c2c4c3" stroke-width="0.5"/><rect x="212.4" y="451.4" width="26.2" height="18.0" fill="none" stroke="#c2c4c3" stroke-width="0.5"/><rect x="172.4" y="422.4" width="106.4" height="76.1" fill="none" stroke="#62b0ba" stroke-width="0.7"/><path d="M225.2 422.4V498.5M172.4 460.3H278.8" stroke="#62b0ba" stroke-width="0.6" fill="none"/><rect x="177.4" y="504.4" width="95.5" height="67.4" fill="none" stroke="#c2c4c3" stroke-width="0.5"/><rect x="181.2" y="507.4" width="88.3" height="62.0" fill="none" stroke="#c2c4c3" stroke-width="0.5"/><rect x="187.3" y="511.5" width="76.1" height="53.7" fill="none" stroke="#c2c4c3" stroke-width="0.5"/><rect x="197.3" y="518.2" width="56.2" height="40.0" fill="none" stroke="#c2c4c3" stroke-width="0.5"/><rect x="212.4" y="529.4" width="26.2" height="18.0" fill="none" stroke="#c2c4c3" stroke-width="0.5"/><rect x="172.4" y="500.4" width="106.4" height="76.3" fill="none" stroke="#62b0ba" stroke-width="0.7"/><path d="M225.2 500.4V576.7M172.4 538.3H278.8" stroke="#62b0ba" stroke-width="0.6" fill="none"/></svg>
<div class="a" style="left:514.00px;top:298.96px;width:208.00px;height:35.52px;font-size:29.60px;line-height:35.52px;color:#f5f2ef;font-weight:bold;white-space:nowrap;text-align:center;letter-spacing:0.00px;transform:scale(0.2500);transform-origin:0 0">@字体视界定制</div>
<div class="a" style="left:514.00px;top:308.64px;width:208.00px;height:31.68px;font-size:26.40px;line-height:31.68px;color:#f6f3f0;font-weight:bold;white-space:nowrap;text-align:center;letter-spacing:2.40px;transform:scale(0.2500);transform-origin:0 0">XIAOYUAN.CN</div>
<div class="a" style="left:514.00px;top:317.28px;width:208.00px;height:29.76px;font-size:24.80px;line-height:29.76px;color:#f7f4f1;font-weight:bold;white-space:nowrap;text-align:center;letter-spacing:2.00px;transform:scale(0.2500);transform-origin:0 0">WWW.ZITI.COM</div>
<svg class="a" style="left:336px;top:296px" width="562" height="290" viewBox="336 296 562 290"><path d="M447.0 297.2V300M447.0 581V584" stroke="#333" stroke-width="0.6"/><path d="M648.0 297.2V300M648.0 581V584" stroke="#333" stroke-width="0.6"/><path d="M665.4 297.2V300M665.4 581V584" stroke="#333" stroke-width="0.6"/><path d="M866.6 297.2V300M866.6 581V584" stroke="#333" stroke-width="0.6"/></svg>
<div class="v" style="left:417.52px;top:509.90px;width:26.80px;font-size:26.80px;line-height:26.80px;color:#777;font-weight:normal;letter-spacing:0.00px;transform:scale(0.1250);transform-origin:0 0;text-shadow:2.4px 0 1.2px rgba(110,110,110,0.42),-2.4px 0 1.2px rgba(110,110,110,0.42)">责任编辑：肖海鸥</div>
<div class="v" style="left:411.82px;top:509.90px;width:26.80px;font-size:26.80px;line-height:26.80px;color:#777;font-weight:normal;letter-spacing:0.00px;transform:scale(0.1250);transform-origin:0 0;text-shadow:2.4px 0 1.2px rgba(110,110,110,0.42),-2.4px 0 1.2px rgba(110,110,110,0.42)">装帧设计：</div>
<div class="v" style="left:405.52px;top:509.90px;width:26.80px;font-size:26.80px;line-height:26.80px;color:#777;font-weight:normal;letter-spacing:0.00px;transform:scale(0.1250);transform-origin:0 0;text-shadow:2.4px 0 1.2px rgba(110,110,110,0.42),-2.4px 0 1.2px rgba(110,110,110,0.42)">版式方式：万能黄金分割网格</div>
<div class="v" style="left:570.55px;top:369.20px;width:23.60px;font-size:23.60px;line-height:23.60px;color:#787878;font-weight:normal;letter-spacing:0.80px;transform:scale(0.1250);transform-origin:0 0;text-shadow:3.2px 0 1.6px rgba(110,110,110,0.42),-3.2px 0 1.6px rgba(110,110,110,0.42)">；比例、节奏与对比，共同构成了版面的气质和性格</div>
<div class="v" style="left:561.95px;top:369.20px;width:23.60px;font-size:23.60px;line-height:23.60px;color:#787878;font-weight:normal;letter-spacing:0.80px;transform:scale(0.1250);transform-origin:0 0;text-shadow:3.2px 0 1.6px rgba(110,110,110,0.42),-3.2px 0 1.6px rgba(110,110,110,0.42)">。设计不只是一种职业，更是一种信仰。当我们谈论</div>
<div class="v" style="left:553.55px;top:369.20px;width:23.60px;font-size:23.60px;line-height:23.60px;color:#787878;font-weight:normal;letter-spacing:0.80px;transform:scale(0.1250);transform-origin:0 0;text-shadow:3.2px 0 1.6px rgba(110,110,110,0.42),-3.2px 0 1.6px rgba(110,110,110,0.42)">设计的时候，其实是在谈论如何看待世界与自己。在</div>
<div class="v" style="left:545.05px;top:369.20px;width:23.60px;font-size:23.60px;line-height:23.60px;color:#787878;font-weight:normal;letter-spacing:0.80px;transform:scale(0.1250);transform-origin:0 0;text-shadow:3.2px 0 1.6px rgba(110,110,110,0.42),-3.2px 0 1.6px rgba(110,110,110,0.42)">商业与艺术之间，设计师需要保持清醒的判断、持久</div>
<div class="v" style="left:536.85px;top:369.20px;width:23.60px;font-size:23.60px;line-height:23.60px;color:#787878;font-weight:normal;letter-spacing:0.80px;transform:scale(0.1250);transform-origin:0 0;text-shadow:3.2px 0 1.6px rgba(110,110,110,0.42),-3.2px 0 1.6px rgba(110,110,110,0.42)">的热情，用专业的力量去回应时代的问题。本书以对</div>
<div class="v" style="left:528.45px;top:369.20px;width:23.60px;font-size:23.60px;line-height:23.60px;color:#787878;font-weight:normal;letter-spacing:0.80px;transform:scale(0.1250);transform-origin:0 0;text-shadow:3.2px 0 1.6px rgba(110,110,110,0.42),-3.2px 0 1.6px rgba(110,110,110,0.42)">谈的形式，记录三位设计人多年的思考与实践：从品</div>
<div class="v" style="left:520.65px;top:369.20px;width:23.60px;font-size:23.60px;line-height:23.60px;color:#787878;font-weight:normal;letter-spacing:0.80px;transform:scale(0.1250);transform-origin:0 0;text-shadow:3.2px 0 1.6px rgba(110,110,110,0.42),-3.2px 0 1.6px rgba(110,110,110,0.42)">牌到书籍，从方法到态度，坦诚而深入。好的设计来</div>
<div class="v" style="left:651.58px;top:343.60px;width:34.40px;font-size:34.40px;line-height:34.40px;color:#333;font-weight:bold;letter-spacing:4.00px;transform:scale(0.2500);transform-origin:0 0;font-family:'Liberation Serif','Noto Serif CJK SC',serif">设计信仰</div>
<div class="v" style="left:652.98px;top:408.00px;width:24.40px;font-size:24.40px;line-height:24.40px;color:#333;font-weight:bold;letter-spacing:1.40px;transform:scale(0.2500);transform-origin:0 0;font-family:'Liberation Serif','Noto Serif CJK SC',serif">职业的力量</div>
<svg class="a" style="left:652px;top:526px" width="9" height="6" viewBox="0 0 9 6"><rect x="0.6" y="0.6" width="7" height="4.4" rx="1" fill="none" stroke="#6a6a6a" stroke-width="0.6"/><path d="M2.4 2.4L4.1 1.4L5.8 2.4M1.6 4.6H6.6" stroke="#6a6a6a" stroke-width="0.5" fill="none"/></svg>
<div class="v" style="left:655.55px;top:533.20px;width:26.40px;font-size:26.40px;line-height:26.40px;color:#4a4a4a;font-weight:500;letter-spacing:2.00px;transform:scale(0.1250);transform-origin:0 0">商务印书馆</div>
<div class="v" style="left:653.35px;top:533.20px;width:13.60px;font-size:13.60px;line-height:13.60px;color:#3a3a3a;font-weight:bold;letter-spacing:0.00px;transform:scale(0.1250);transform-origin:0 0">The Commercial Press</div>
<div class="a" style="left:577.40px;top:503.91px;width:340.80px;height:30.24px;font-size:25.20px;line-height:30.24px;color:#555;font-weight:normal;white-space:nowrap;text-align:left;letter-spacing:0.00px;transform:scale(0.1250);transform-origin:0 0">上架建议: 设计/艺术/广告学</div>
<div class="a" style="left:577.2px;top:510px;width:41.4px;height:40.6px;border:0.5px solid #d2d2d2;box-sizing:border-box;background:#fff"></div>
<div class="a" style="left:583.00px;top:513.92px;width:240.00px;height:22.08px;font-size:18.40px;line-height:22.08px;color:#333;font-weight:bold;white-space:nowrap;text-align:center;letter-spacing:0.00px;transform:scale(0.1250);transform-origin:0 0">ISBN 978-7-100-08964-9</div>
<svg class="a" style="left:583.5px;top:517.2px" width="29" height="21.2" viewBox="0 0 29 21.2"><rect x="0.00" y="0" width="0.80" height="21.2" fill="#111"/><rect x="1.10" y="0" width="0.70" height="21.2" fill="#111"/><rect x="2.30" y="0" width="1.50" height="21.2" fill="#111"/><rect x="4.10" y="0" width="0.80" height="21.2" fill="#111"/><rect x="5.15" y="0" width="0.70" height="21.2" fill="#111"/><rect x="6.10" y="0" width="1.50" height="21.2" fill="#111"/><rect x="8.10" y="0" width="1.10" height="21.2" fill="#111"/><rect x="9.45" y="0" width="0.80" height="21.2" fill="#111"/><rect x="10.75" y="0" width="1.10" height="21.2" fill="#111"/><rect x="12.15" y="0" width="0.80" height="21.2" fill="#111"/><rect x="13.20" y="0" width="1.10" height="21.2" fill="#111"/><rect x="14.55" y="0" width="0.70" height="21.2" fill="#111"/><rect x="15.75" y="0" width="1.10" height="21.2" fill="#111"/><rect x="17.15" y="0" width="0.80" height="21.2" fill="#111"/><rect x="18.20" y="0" width="1.10" height="21.2" fill="#111"/><rect x="19.60" y="0" width="1.10" height="21.2" fill="#111"/><rect x="20.95" y="0" width="1.10" height="21.2" fill="#111"/><rect x="22.55" y="0" width="1.50" height="21.2" fill="#111"/><rect x="24.55" y="0" width="0.80" height="21.2" fill="#111"/><rect x="25.60" y="0" width="0.80" height="21.2" fill="#111"/><rect x="26.70" y="0" width="1.10" height="21.2" fill="#111"/><rect x="28.05" y="0" width="1.10" height="21.2" fill="#111"/></svg>
<div class="a" style="left:580.80px;top:539.22px;width:273.60px;height:22.08px;font-size:18.40px;line-height:22.08px;color:#222;font-weight:bold;white-space:nowrap;text-align:center;letter-spacing:2.80px;transform:scale(0.1250);transform-origin:0 0">9 787100 089649</div>
<div class="a" style="left:580px;top:543px;width:36px;height:0.5px;background:#c8c8c8"></div>
<div class="a" style="left:580.00px;top:545.26px;width:288.00px;height:27.84px;font-size:23.20px;line-height:27.84px;color:#444;font-weight:normal;white-space:nowrap;text-align:center;letter-spacing:0.00px;transform:scale(0.1250);transform-origin:0 0">定价: 49.00元</div>
<div class="a" style="left:577.00px;top:552.90px;width:328.00px;height:33.60px;font-size:28.00px;line-height:33.60px;color:#666;font-weight:normal;white-space:nowrap;text-align:center;letter-spacing:0.00px;transform:scale(0.1250);transform-origin:0 0">www.cp.com.cn/book</div>
<div class="v" style="left:808.81px;top:343.40px;width:62.80px;font-size:62.80px;line-height:62.80px;color:#404040;font-weight:bold;letter-spacing:2.20px;transform:scale(0.2500);transform-origin:0 0;font-family:'Liberation Serif','Noto Serif CJK SC',serif">设计信仰</div>
<div class="v" style="left:783.02px;top:390.00px;width:38.40px;font-size:38.40px;line-height:38.40px;color:#2e2e2e;font-weight:bold;letter-spacing:2.40px;transform:scale(0.2500);transform-origin:0 0;font-family:'Liberation Serif','Noto Serif CJK SC',serif">职业的力量</div>
<div class="v" style="left:755.35px;top:389.50px;width:23.20px;font-size:23.20px;line-height:23.20px;color:#2a2a2a;font-weight:bold;letter-spacing:1.60px;transform:scale(0.2500);transform-origin:0 0;font-family:'Liberation Serif','Noto Serif CJK SC',serif">姜奇平</div>
<div class="v" style="left:738.35px;top:389.50px;width:23.20px;font-size:23.20px;line-height:23.20px;color:#2a2a2a;font-weight:bold;letter-spacing:1.60px;transform:scale(0.2500);transform-origin:0 0;font-family:'Liberation Serif','Noto Serif CJK SC',serif">张子建</div>
<div class="v" style="left:721.15px;top:389.50px;width:23.20px;font-size:23.20px;line-height:23.20px;color:#2a2a2a;font-weight:bold;letter-spacing:1.60px;transform:scale(0.2500);transform-origin:0 0;font-family:'Liberation Serif','Noto Serif CJK SC',serif">米士杰</div>
<div class="a" style="left:745.50px;top:393.24px;width:36.00px;height:41.28px;font-size:34.40px;line-height:41.28px;color:#444;font-weight:normal;white-space:nowrap;text-align:center;letter-spacing:0.00px;transform:scale(0.2500);transform-origin:0 0;font-family:'Liberation Serif','Noto Serif CJK SC',serif">×</div>
<div class="a" style="left:728.30px;top:393.24px;width:36.00px;height:41.28px;font-size:34.40px;line-height:41.28px;color:#444;font-weight:normal;white-space:nowrap;text-align:center;letter-spacing:0.00px;transform:scale(0.2500);transform-origin:0 0;font-family:'Liberation Serif','Noto Serif CJK SC',serif">×</div>
<div class="v" style="left:832.03px;top:493.30px;width:29.60px;font-size:29.60px;line-height:29.60px;color:#7c7c7c;font-weight:normal;letter-spacing:3.20px;transform:scale(0.1250);transform-origin:0 0;text-shadow:3.2px 0 1.6px rgba(110,110,110,0.42),-3.2px 0 1.6px rgba(110,110,110,0.42)">自对生活的观察，来自对细节的</div>
<div class="v" style="left:822.89px;top:493.30px;width:29.60px;font-size:29.60px;line-height:29.60px;color:#7c7c7c;font-weight:normal;letter-spacing:3.20px;transform:scale(0.1250);transform-origin:0 0;text-shadow:3.2px 0 1.6px rgba(110,110,110,0.42),-3.2px 0 1.6px rgba(110,110,110,0.42)">坚持，也来自对人的尊重。这是</div>
<div class="v" style="left:813.76px;top:493.30px;width:29.60px;font-size:29.60px;line-height:29.60px;color:#7c7c7c;font-weight:normal;letter-spacing:3.20px;transform:scale(0.1250);transform-origin:0 0;text-shadow:3.2px 0 1.6px rgba(110,110,110,0.42),-3.2px 0 1.6px rgba(110,110,110,0.42)">职业的底线，也是力量所在。万</div>
<div class="v" style="left:804.63px;top:493.30px;width:29.60px;font-size:29.60px;line-height:29.60px;color:#7c7c7c;font-weight:normal;letter-spacing:3.20px;transform:scale(0.1250);transform-origin:0 0;text-shadow:3.2px 0 1.6px rgba(110,110,110,0.42),-3.2px 0 1.6px rgba(110,110,110,0.42)">能黄金分割网格是一种版面构成</div>
<div class="v" style="left:795.50px;top:493.30px;width:29.60px;font-size:29.60px;line-height:29.60px;color:#7c7c7c;font-weight:normal;letter-spacing:3.20px;transform:scale(0.1250);transform-origin:0 0;text-shadow:3.2px 0 1.6px rgba(110,110,110,0.42),-3.2px 0 1.6px rgba(110,110,110,0.42)">工具，它以黄金比例为基础，层</div>
<div class="v" style="left:786.36px;top:493.30px;width:29.60px;font-size:29.60px;line-height:29.60px;color:#7c7c7c;font-weight:normal;letter-spacing:3.20px;transform:scale(0.1250);transform-origin:0 0;text-shadow:3.2px 0 1.6px rgba(110,110,110,0.42),-3.2px 0 1.6px rgba(110,110,110,0.42)">层嵌套，帮助设计师快速建立秩</div>
<div class="v" style="left:777.23px;top:493.30px;width:29.60px;font-size:29.60px;line-height:29.60px;color:#7c7c7c;font-weight:normal;letter-spacing:3.20px;transform:scale(0.1250);transform-origin:0 0;text-shadow:3.2px 0 1.6px rgba(110,110,110,0.42),-3.2px 0 1.6px rgba(110,110,110,0.42)">序。留白并非空无一物，而是让</div>
<div class="v" style="left:768.10px;top:493.30px;width:29.60px;font-size:29.60px;line-height:29.60px;color:#7c7c7c;font-weight:normal;letter-spacing:3.20px;transform:scale(0.1250);transform-origin:0 0;text-shadow:3.2px 0 1.6px rgba(110,110,110,0.42),-3.2px 0 1.6px rgba(110,110,110,0.42)">内容得以呼吸的空间；比例、节</div>
<div class="v" style="left:758.96px;top:493.30px;width:29.60px;font-size:29.60px;line-height:29.60px;color:#7c7c7c;font-weight:normal;letter-spacing:3.20px;transform:scale(0.1250);transform-origin:0 0;text-shadow:3.2px 0 1.6px rgba(110,110,110,0.42),-3.2px 0 1.6px rgba(110,110,110,0.42)">奏与对比，共同构成了版面的气</div>
<div class="v" style="left:749.83px;top:493.30px;width:29.60px;font-size:29.60px;line-height:29.60px;color:#7c7c7c;font-weight:normal;letter-spacing:3.20px;transform:scale(0.1250);transform-origin:0 0;text-shadow:3.2px 0 1.6px rgba(110,110,110,0.42),-3.2px 0 1.6px rgba(110,110,110,0.42)">质和性格。设计不只是一种职业</div>
<div class="v" style="left:740.70px;top:493.30px;width:29.60px;font-size:29.60px;line-height:29.60px;color:#7c7c7c;font-weight:normal;letter-spacing:3.20px;transform:scale(0.1250);transform-origin:0 0;text-shadow:3.2px 0 1.6px rgba(110,110,110,0.42),-3.2px 0 1.6px rgba(110,110,110,0.42)">，更是一种信仰。当我们谈论设</div>
<div class="v" style="left:731.56px;top:493.30px;width:29.60px;font-size:29.60px;line-height:29.60px;color:#7c7c7c;font-weight:normal;letter-spacing:3.20px;transform:scale(0.1250);transform-origin:0 0;text-shadow:3.2px 0 1.6px rgba(110,110,110,0.42),-3.2px 0 1.6px rgba(110,110,110,0.42)">计的时候，其实是在谈论如何看</div>
<div class="v" style="left:722.43px;top:493.30px;width:29.60px;font-size:29.60px;line-height:29.60px;color:#7c7c7c;font-weight:normal;letter-spacing:3.20px;transform:scale(0.1250);transform-origin:0 0;text-shadow:3.2px 0 1.6px rgba(110,110,110,0.42),-3.2px 0 1.6px rgba(110,110,110,0.42)">待世界与自己。在商业与艺术之</div>
<div class="v" style="left:713.30px;top:493.30px;width:29.60px;font-size:29.60px;line-height:29.60px;color:#7c7c7c;font-weight:normal;letter-spacing:3.20px;transform:scale(0.1250);transform-origin:0 0;text-shadow:3.2px 0 1.6px rgba(110,110,110,0.42),-3.2px 0 1.6px rgba(110,110,110,0.42)">间，设计师需要保持清醒的判断</div>
<div class="v" style="left:704.17px;top:493.30px;width:29.60px;font-size:29.60px;line-height:29.60px;color:#7c7c7c;font-weight:normal;letter-spacing:3.20px;transform:scale(0.1250);transform-origin:0 0;text-shadow:3.2px 0 1.6px rgba(110,110,110,0.42),-3.2px 0 1.6px rgba(110,110,110,0.42)">、持久的热情，用专业的力量去</div>
<div class="v" style="left:695.03px;top:493.30px;width:29.60px;font-size:29.60px;line-height:29.60px;color:#7c7c7c;font-weight:normal;letter-spacing:3.20px;transform:scale(0.1250);transform-origin:0 0;text-shadow:3.2px 0 1.6px rgba(110,110,110,0.42),-3.2px 0 1.6px rgba(110,110,110,0.42)">回应时代的问题。本书以对谈的</div>
<div class="v" style="left:892.59px;top:343.70px;width:21.60px;font-size:21.60px;line-height:21.60px;color:#808080;font-weight:normal;letter-spacing:0.00px;transform:scale(0.1250);transform-origin:0 0;text-shadow:2.8px 0 1.4px rgba(110,110,110,0.42),-2.8px 0 1.4px rgba(110,110,110,0.42)">形式，记录三位设计人多年的思考与实践：</div>
<div class="v" style="left:885.49px;top:343.70px;width:21.60px;font-size:21.60px;line-height:21.60px;color:#808080;font-weight:normal;letter-spacing:0.00px;transform:scale(0.1250);transform-origin:0 0;text-shadow:2.8px 0 1.4px rgba(110,110,110,0.42),-2.8px 0 1.4px rgba(110,110,110,0.42)">从品牌到书籍，从方法到态度，坦诚而深入</div>
<div class="v" style="left:892.59px;top:417.50px;width:21.60px;font-size:21.60px;line-height:21.60px;color:#808080;font-weight:normal;letter-spacing:0.00px;transform:scale(0.1250);transform-origin:0 0;text-shadow:2.8px 0 1.4px rgba(110,110,110,0.42),-2.8px 0 1.4px rgba(110,110,110,0.42)">。好的设计来自对生活的观察，来自对细节</div>
<div class="v" style="left:885.49px;top:417.50px;width:21.60px;font-size:21.60px;line-height:21.60px;color:#808080;font-weight:normal;letter-spacing:0.00px;transform:scale(0.1250);transform-origin:0 0;text-shadow:2.8px 0 1.4px rgba(110,110,110,0.42),-2.8px 0 1.4px rgba(110,110,110,0.42)">的坚持，也来自对人的尊重。这是职业的底</div>
<div class="v" style="left:892.59px;top:492.80px;width:21.60px;font-size:21.60px;line-height:21.60px;color:#808080;font-weight:normal;letter-spacing:0.00px;transform:scale(0.1250);transform-origin:0 0;text-shadow:2.8px 0 1.4px rgba(110,110,110,0.42),-2.8px 0 1.4px rgba(110,110,110,0.42)">线，也是力量所在。万能黄金分割网格是</div>
<div class="v" style="left:885.49px;top:492.80px;width:21.60px;font-size:21.60px;line-height:21.60px;color:#808080;font-weight:normal;letter-spacing:0.00px;transform:scale(0.1250);transform-origin:0 0;text-shadow:2.8px 0 1.4px rgba(110,110,110,0.42),-2.8px 0 1.4px rgba(110,110,110,0.42)">一种版面构成工具，它以黄金比例为基础</div>
<svg class="a" style="left:43px;top:53px" width="855" height="547" viewBox="43 53 855 547"><path d="M60.5 53V600" stroke="rgba(66,234,240,0.7)" stroke-width="1"/><path d="M167.5 53V600" stroke="rgba(66,234,240,0.7)" stroke-width="1"/><path d="M172.5 53V600" stroke="rgba(66,234,240,0.7)" stroke-width="1"/><path d="M279.5 53V600" stroke="rgba(66,234,240,0.7)" stroke-width="1"/><rect x="447.5" y="304.5" width="200.0" height="271.0" fill="none" stroke="rgba(56,232,242,0.76)" stroke-width="1"/><rect x="458.5" y="319.5" width="178.0" height="241.0" fill="none" stroke="rgba(56,232,242,0.76)" stroke-width="1"/><rect x="467.5" y="328.5" width="164.0" height="223.0" fill="none" stroke="rgba(56,232,242,0.76)" stroke-width="1"/><rect x="476.5" y="343.5" width="142.0" height="193.0" fill="none" stroke="rgba(56,232,242,0.76)" stroke-width="1"/><rect x="494.5" y="368.5" width="106.0" height="143.0" fill="none" stroke="rgba(56,232,242,0.76)" stroke-width="1"/><rect x="523.5" y="408.5" width="48.0" height="64.0" fill="none" stroke="rgba(56,232,242,0.76)" stroke-width="1"/><rect x="665.5" y="304.5" width="201.0" height="271.0" fill="none" stroke="rgba(56,232,242,0.76)" stroke-width="1"/><rect x="676.5" y="319.5" width="179.0" height="241.0" fill="none" stroke="rgba(56,232,242,0.76)" stroke-width="1"/><rect x="683.5" y="328.5" width="164.0" height="223.0" fill="none" stroke="rgba(56,232,242,0.76)" stroke-width="1"/><rect x="694.5" y="343.5" width="143.0" height="193.0" fill="none" stroke="rgba(56,232,242,0.76)" stroke-width="1"/><rect x="713.5" y="368.5" width="106.0" height="143.0" fill="none" stroke="rgba(56,232,242,0.76)" stroke-width="1"/><rect x="741.5" y="408.5" width="48.0" height="64.0" fill="none" stroke="rgba(56,232,242,0.76)" stroke-width="1"/><path d="M547.5 304.5V575.5M765.5 304.5V575.5M447.5 440.5H647.5M665.5 440.5H866.5" stroke="rgba(56,232,242,0.76)" stroke-width="1" fill="none"/><circle cx="547.9" cy="440.2" r="1.1" fill="rgba(56,232,242,0.76)"/><circle cx="765.3" cy="440.2" r="1.1" fill="rgba(56,232,242,0.76)"/><path d="M596.2 438.6l2 2m0 -2l-2 2" stroke="rgba(56,232,242,0.76)" stroke-width="0.6"/><path d="M814.5 438.6l2 2m0 -2l-2 2" stroke="rgba(56,232,242,0.76)" stroke-width="0.6"/><circle cx="765.3" cy="371" r="0.9" fill="rgba(56,232,242,0.76)"/></svg>
</div></div>
<div class="a" style="left:897.2px;top:43.3px;width:9.4px;height:557px;background:#4a4a4a"></div>
<div class="a" style="left:897.2px;top:43.3px;width:9.4px;height:9.7px;background:#5a5a5a"></div>
<svg class="a" style="left:899px;top:46.5px" width="6" height="4" viewBox="0 0 6 4"><path d="M0.8 3.2L3 1L5.2 3.2" stroke="#cfcfcf" stroke-width="0.9" fill="none"/></svg>
<div class="a" style="left:898.4px;top:334.8px;width:7.5px;height:14.2px;background:#696969;border-radius:3.7px"></div>
<svg class="a" style="left:899px;top:593.3px" width="6" height="4" viewBox="0 0 6 4"><path d="M0.8 0.8L3 3L5.2 0.8" stroke="#cfcfcf" stroke-width="0.9" fill="none"/></svg>
<div class="a" style="left:906.2px;top:27px;width:1.8px;height:585px;background:#3e3e3e"></div>
<div class="a" style="left:33.5px;top:600px;width:873.3px;height:12px;background:#535353"></div>
<div class="a" style="left:34.6px;top:601.2px;width:28.5px;height:8.6px;background:#454545;border:0.6px solid #3a3a3a;box-sizing:border-box"></div>
<div class="a" style="left:36.6px;top:601.6px;font-size:6.4px;line-height:8px;color:#e2e2e2">50%</div>
<svg class="a" style="left:65.8px;top:603.6px" width="5" height="4" viewBox="0 0 5 4"><path d="M0.7 0.8L2.5 2.7L4.3 0.8" stroke="#dcdcdc" stroke-width="1" fill="none"/></svg>
<div class="a" style="left:75.5px;top:601.2px;width:29px;height:8.6px;background:#454545;border:0.6px solid #3a3a3a;box-sizing:border-box"></div>
<div class="a" style="left:77.5px;top:601.6px;font-size:6.4px;line-height:8px;color:#e2e2e2">0°</div>
<svg class="a" style="left:106.2px;top:603.6px" width="5" height="4" viewBox="0 0 5 4"><path d="M0.7 0.8L2.5 2.7L4.3 0.8" stroke="#dcdcdc" stroke-width="1" fill="none"/></svg>
<svg class="a" style="left:118px;top:602.5px" width="18" height="6" viewBox="0 0 18 6"><path d="M1.2 0.8V5.2" stroke="#cfcfcf" stroke-width="0.9"/><path d="M4.8 0.8L1.9 3L4.8 5.2Z" fill="#cfcfcf"/><path d="M13.8 0.8L10.9 3L13.8 5.2Z" fill="#cfcfcf"/></svg>
<div class="a" style="left:137px;top:601.2px;width:27px;height:8.6px;background:#454545;border:0.6px solid #3a3a3a;box-sizing:border-box"></div>
<div class="a" style="left:139px;top:601.6px;font-size:6.4px;line-height:8px;color:#e2e2e2">2</div>
<svg class="a" style="left:162.0px;top:603.6px" width="5" height="4" viewBox="0 0 5 4"><path d="M0.7 0.8L2.5 2.7L4.3 0.8" stroke="#dcdcdc" stroke-width="1" fill="none"/></svg>
<svg class="a" style="left:173px;top:602.5px" width="18" height="6" viewBox="0 0 18 6"><path d="M1.8 0.8L4.7 3L1.8 5.2Z" fill="#6e6e6e"/><path d="M10 0.8L12.9 3L10 5.2Z" fill="#6e6e6e"/><path d="M13.6 0.8V5.2" stroke="#6e6e6e" stroke-width="0.9"/></svg>
<div class="a" style="left:193px;top:601px;width:109px;height:9px;background:#4e4e4e"></div>
<div class="a" style="left:241px;top:601.4px;font-size:6.6px;line-height:9px;color:#dcdcdc">选择</div>
<svg class="a" style="left:306px;top:602.5px" width="5" height="6" viewBox="0 0 5 6"><path d="M1 0.6L4.2 3L1 5.4Z" fill="#e6e6e6"/></svg>
<div class="a" style="left:314px;top:600.4px;width:583.5px;height:9.2px;background:#4a4a4a"></div>
<svg class="a" style="left:316px;top:602.4px" width="4" height="6" viewBox="0 0 4 6"><path d="M3 0.8L1 3L3 5.2" stroke="#9a9a9a" stroke-width="0.9" fill="none"/></svg>
<svg class="a" style="left:890.5px;top:602.4px" width="4" height="6" viewBox="0 0 4 6"><path d="M1 0.8L3 3L1 5.2" stroke="#b8b8b8" stroke-width="0.9" fill="none"/></svg>
<div class="a" style="left:733.3px;top:601.2px;width:14.7px;height:7.6px;background:#696969;border-radius:3.8px"></div>
<div class="a" style="left:897.2px;top:600px;width:9.2px;height:9.6px;background:#5a5a5a"></div>
<div class="a" style="left:908px;top:27px;width:20.3px;height:585px;background:#535353"></div>
<div class="a" style="left:913.2px;top:36.2px;width:11.3px;height:1.6px;background:#434343"></div>
<svg class="a" style="left:913px;top:42px" width="12" height="11" viewBox="0 0 12 11"><path d="M1.6 1H10.4Q11.2 1 11.2 1.8V6.4Q11.2 7.2 10.4 7.2H5L2.6 9.8V7.2H1.6Q0.8 7.2 0.8 6.4V1.8Q0.8 1 1.6 1Z" fill="#dadada"/></svg>
<div class="a" style="left:908px;top:56.4px;width:20.3px;height:1.2px;background:#444"></div>
<div class="a" style="left:928.3px;top:27px;width:1.7px;height:585px;background:#3c3c3c"></div>
<div class="a" style="left:908px;top:27px;width:164px;height:7.4px;background:#424242"></div>
<svg class="a" style="left:921px;top:29px" width="5" height="4" viewBox="0 0 5 4"><path d="M0.3 0.6L1.9 2L0.3 3.4ZM2.6 0.6L4.2 2L2.6 3.4Z" fill="#d0d0d0"/></svg>
<div class="a" style="left:930px;top:34.4px;width:142px;height:578px;background:#535353"></div>
<div class="a" style="left:1069px;top:34.4px;width:3px;height:578px;background:#4b4b4b"></div>
<svg class="a" style="left:1060.5px;top:29px" width="5" height="4" viewBox="0 0 5 4"><path d="M1.9 0.6L0.3 2L1.9 3.4ZM4.2 0.6L2.6 2L4.2 3.4Z" fill="#d0d0d0"/></svg>
<div class="a" style="left:954px;top:34.4px;width:115px;height:14.4px;background:#424242"></div>
<div class="a" style="left:954px;top:34.4px;width:24.5px;height:14.4px;background:#464646;border-right:1px solid #3b3b3b;box-sizing:border-box"></div>
<div class="a" style="left:978.5px;top:34.4px;width:22.2px;height:14.4px;background:#464646;border-right:1px solid #3b3b3b;box-sizing:border-box"></div>
<div class="pt" style="left:935.5px;top:36.8px;color:#fff;font-weight:bold">属性</div>
<div class="pt" style="left:959.6px;top:36.8px;color:#a8a8a8">图层</div>
<div class="pt" style="left:984.3px;top:36.8px;color:#a8a8a8">库</div>
<div class="pt" style="left:935.5px;top:54.8px">未选择对象</div>
<div class="a" style="left:930px;top:67px;width:132px;height:1px;background:#474747"></div>
<div class="pt" style="left:935.5px;top:73.6px">变换</div>
<svg class="a" style="left:935px;top:92px" width="12" height="12" viewBox="0 0 12 12"><rect x="0.8" y="0.8" width="2.4" height="2.4" fill="none" stroke="#d8d8d8" stroke-width="0.7"/><rect x="0.8" y="4.8" width="2.4" height="2.4" fill="none" stroke="#d8d8d8" stroke-width="0.7"/><rect x="0.8" y="8.8" width="2.4" height="2.4" fill="none" stroke="#d8d8d8" stroke-width="0.7"/><rect x="4.8" y="0.8" width="2.4" height="2.4" fill="none" stroke="#d8d8d8" stroke-width="0.7"/><rect x="4.7" y="4.7" width="2.6" height="2.6" fill="#fff"/><rect x="4.8" y="8.8" width="2.4" height="2.4" fill="none" stroke="#d8d8d8" stroke-width="0.7"/><rect x="8.8" y="0.8" width="2.4" height="2.4" fill="none" stroke="#d8d8d8" stroke-width="0.7"/><rect x="8.8" y="4.8" width="2.4" height="2.4" fill="none" stroke="#d8d8d8" stroke-width="0.7"/><rect x="8.8" y="8.8" width="2.4" height="2.4" fill="none" stroke="#d8d8d8" stroke-width="0.7"/><path d="M3.3 2H4.7M7.3 2H8.7M3.3 10H4.7M7.3 10H8.7M2 3.3V4.7M2 7.3V8.7M10 3.3V4.7M10 7.3V8.7" stroke="#bbb" stroke-width="0.6"/></svg>
<div class="pt" style="left:952.5px;top:86.4px;font-weight:bold">X:</div>
<div class="a" style="left:961.2px;top:85.1px;width:31.6px;height:11.2px;background:#5a5a5a"></div>
<div class="a" style="left:964.2px;top:85.69999999999999px;font-size:6.8px;line-height:9px;color:#7c7c7c;font-family:'Liberation Mono',monospace;white-space:nowrap;letter-spacing:-0.7px">0 px</div>
<div class="pt" style="left:952.5px;top:100.8px;font-weight:bold">Y:</div>
<div class="a" style="left:961.2px;top:99.2px;width:31.6px;height:11.2px;background:#5a5a5a"></div>
<div class="a" style="left:964.2px;top:99.8px;font-size:6.8px;line-height:9px;color:#7c7c7c;font-family:'Liberation Mono',monospace;white-space:nowrap;letter-spacing:-0.7px">0 px</div>
<div class="pt" style="left:1001px;top:86.4px;font-weight:bold">宽 :</div>
<div class="a" style="left:1015.1px;top:85.1px;width:31.6px;height:11.2px;background:#5a5a5a"></div>
<div class="a" style="left:1018.1px;top:85.69999999999999px;font-size:6.8px;line-height:9px;color:#7c7c7c;font-family:'Liberation Mono',monospace;white-space:nowrap;letter-spacing:-0.7px">0.0001 p</div>
<div class="pt" style="left:1001px;top:100.8px;font-weight:bold">高 :</div>
<div class="a" style="left:1015.1px;top:99.2px;width:31.6px;height:11.2px;background:#5a5a5a"></div>
<div class="a" style="left:1018.1px;top:99.8px;font-size:6.8px;line-height:9px;color:#7c7c7c;font-family:'Liberation Mono',monospace;white-space:nowrap;letter-spacing:-0.7px">0.0001 p</div>
<svg class="a" style="left:1052.5px;top:93px" width="10" height="12" viewBox="0 0 10 12"><rect x="3.1" y="1.2" width="3.8" height="5" rx="1.9" fill="none" stroke="#dcdcdc" stroke-width="0.9"/><rect x="3.1" y="5.6" width="3.8" height="5" rx="1.9" fill="none" stroke="#dcdcdc" stroke-width="0.9"/><path d="M1.2 1.5L8.8 10.5" stroke="#dcdcdc" stroke-width="0.9"/></svg>
<svg class="a" style="left:950px;top:115px" width="9" height="8" viewBox="0 0 9 8"><path d="M0.6 6.2L5 1.2V6.2Z" fill="none" stroke="#d0d0d0" stroke-width="0.8"/><circle cx="7.4" cy="3.4" r="0.55" fill="#d0d0d0"/><circle cx="7.4" cy="6" r="0.55" fill="#d0d0d0"/></svg>
<div class="a" style="left:959.2px;top:113.8px;width:30.9px;height:11.2px;background:#5a5a5a"></div>
<div class="a" style="left:962.2px;top:114.39999999999999px;font-size:6.8px;line-height:9px;color:#7c7c7c;font-family:'Liberation Mono',monospace;white-space:nowrap;letter-spacing:-0.7px">0°</div>
<svg class="a" style="left:982.5px;top:117.5px" width="5" height="4" viewBox="0 0 5 4"><path d="M0.7 0.8L2.5 2.7L4.3 0.8" stroke="#7e7e7e" stroke-width="0.9" fill="none"/></svg>
<svg class="a" style="left:1013.5px;top:116px" width="9" height="8" viewBox="0 0 9 8"><path d="M4.5 0.4V7.6" stroke="#e2e2e2" stroke-width="0.8"/><path d="M0.6 1.6L3.4 4L0.6 6.4Z" fill="#e2e2e2"/><path d="M8.4 1.6L5.6 4L8.4 6.4Z" fill="#e2e2e2"/></svg>
<svg class="a" style="left:1026.5px;top:115.5px" width="8" height="9" viewBox="0 0 8 9"><path d="M0.4 4.5H7.6" stroke="#e2e2e2" stroke-width="0.8"/><path d="M1.6 0.6L4 3.4L6.4 0.6Z" fill="#e2e2e2"/><path d="M1.6 8.4L4 5.6L6.4 8.4Z" fill="#e2e2e2"/></svg>
<svg class="a" style="left:1050.5px;top:129.7px" width="8" height="3" viewBox="0 0 8 3"><circle cx="1.3" cy="1.5" r="0.75" fill="#d6d6d6"/><circle cx="4" cy="1.5" r="0.75" fill="#d6d6d6"/><circle cx="6.7" cy="1.5" r="0.75" fill="#d6d6d6"/></svg>
<div class="a" style="left:930px;top:136.6px;width:132px;height:1px;background:#474747"></div>
<div class="pt" style="left:935.5px;top:142.6px">外观</div>
<div class="a" style="left:936.2px;top:157.4px;width:9.4px;height:9.4px;background:#fff"></div>
<div class="pt" style="left:953px;top:158px">填色</div>
<div class="a" style="left:936.2px;top:173.2px;width:9.4px;height:9.4px;background:#111;border:0.8px solid #e6e6e6;box-sizing:border-box"></div>
<div class="a" style="left:938.9px;top:175.9px;width:4px;height:4px;border:0.8px solid #e6e6e6;box-sizing:border-box"></div>
<div class="pt" style="left:953px;top:173.2px;text-decoration:underline;text-underline-offset:1px">描边</div>
<div class="a" style="left:986.7px;top:172.8px;width:9.2px;height:10px;background:#454545;border:0.6px solid #5c5c5c;box-sizing:border-box"></div>
<svg class="a" style="left:988.3px;top:174px" width="6" height="8" viewBox="0 0 6 8"><path d="M0.8 2.8L3 0.8L5.2 2.8M0.8 5.2L3 7.2L5.2 5.2" stroke="#dcdcdc" stroke-width="0.8" fill="none"/></svg>
<div class="a" style="left:995.7px;top:172.8px;width:18.7px;height:10px;background:#454545;border:0.6px solid #5c5c5c;box-sizing:border-box"></div>
<div class="a" style="left:997.7px;top:173.4px;font-size:6.8px;line-height:9px;color:#e6e6e6;font-family:'Liberation Mono',monospace;white-space:nowrap;letter-spacing:-0.7px">1 pt</div>
<div class="a" style="left:1014.2px;top:172.8px;width:10.2px;height:10px;background:#454545;border:0.6px solid #5c5c5c;box-sizing:border-box"></div>
<svg class="a" style="left:1016.8px;top:176.3px" width="5" height="4" viewBox="0 0 5 4"><path d="M0.7 0.8L2.5 2.7L4.3 0.8" stroke="#dcdcdc" stroke-width="0.9" fill="none"/></svg>
<svg class="a" style="left:936.2px;top:189.2px" width="9.4" height="9.4" viewBox="0 0 9.4 9.4"><rect x="0.35" y="0.35" width="8.7" height="8.7" fill="#5e5e5e" stroke="#8a8a8a" stroke-width="0.7"/><rect x="0.70" y="0.70" width="2" height="2" fill="#707070"/><rect x="0.70" y="4.70" width="2" height="2" fill="#707070"/><rect x="2.70" y="2.70" width="2" height="2" fill="#707070"/><rect x="2.70" y="6.70" width="2" height="2" fill="#707070"/><rect x="4.70" y="0.70" width="2" height="2" fill="#707070"/><rect x="4.70" y="4.70" width="2" height="2" fill="#707070"/><rect x="6.70" y="2.70" width="2" height="2" fill="#707070"/><rect x="6.70" y="6.70" width="2" height="2" fill="#707070"/></svg>
<div class="pt" style="left:953px;top:189.4px;text-decoration:underline;text-underline-offset:1px">不透明度</div>
<div class="a" style="left:986.7px;top:188.7px;width:27.7px;height:10px;background:#454545;border:0.6px solid #5c5c5c;box-sizing:border-box"></div>
<div class="a" style="left:988.7px;top:189.29999999999998px;font-size:6.8px;line-height:9px;color:#e6e6e6;font-family:'Liberation Mono',monospace;white-space:nowrap;letter-spacing:-0.7px">100%</div>
<div class="a" style="left:1014.2px;top:188.7px;width:10.2px;height:10px;background:#454545;border:0.6px solid #5c5c5c;box-sizing:border-box"></div>
<svg class="a" style="left:1017.6px;top:191.2px" width="4" height="5" viewBox="0 0 4 5"><path d="M0.8 0.7L2.8 2.5L0.8 4.3" stroke="#dcdcdc" stroke-width="0.9" fill="none"/></svg>
<div class="a serif" style="left:939px;top:207.6px;font-size:7.6px;line-height:9px;font-style:italic;color:#dcdcdc">fx.</div>
<svg class="a" style="left:1050.5px;top:224.3px" width="8" height="3" viewBox="0 0 8 3"><circle cx="1.3" cy="1.5" r="0.75" fill="#d6d6d6"/><circle cx="4" cy="1.5" r="0.75" fill="#d6d6d6"/><circle cx="6.7" cy="1.5" r="0.75" fill="#d6d6d6"/></svg>
<div class="a" style="left:930px;top:231px;width:132px;height:1px;background:#474747"></div>
<div class="pt" style="left:935.5px;top:239.8px">快速操作</div>
<div class="a" style="left:8px;top:608.8px;width:1064px;height:4px;background:#474747"></div>
</div></div></body></html>
